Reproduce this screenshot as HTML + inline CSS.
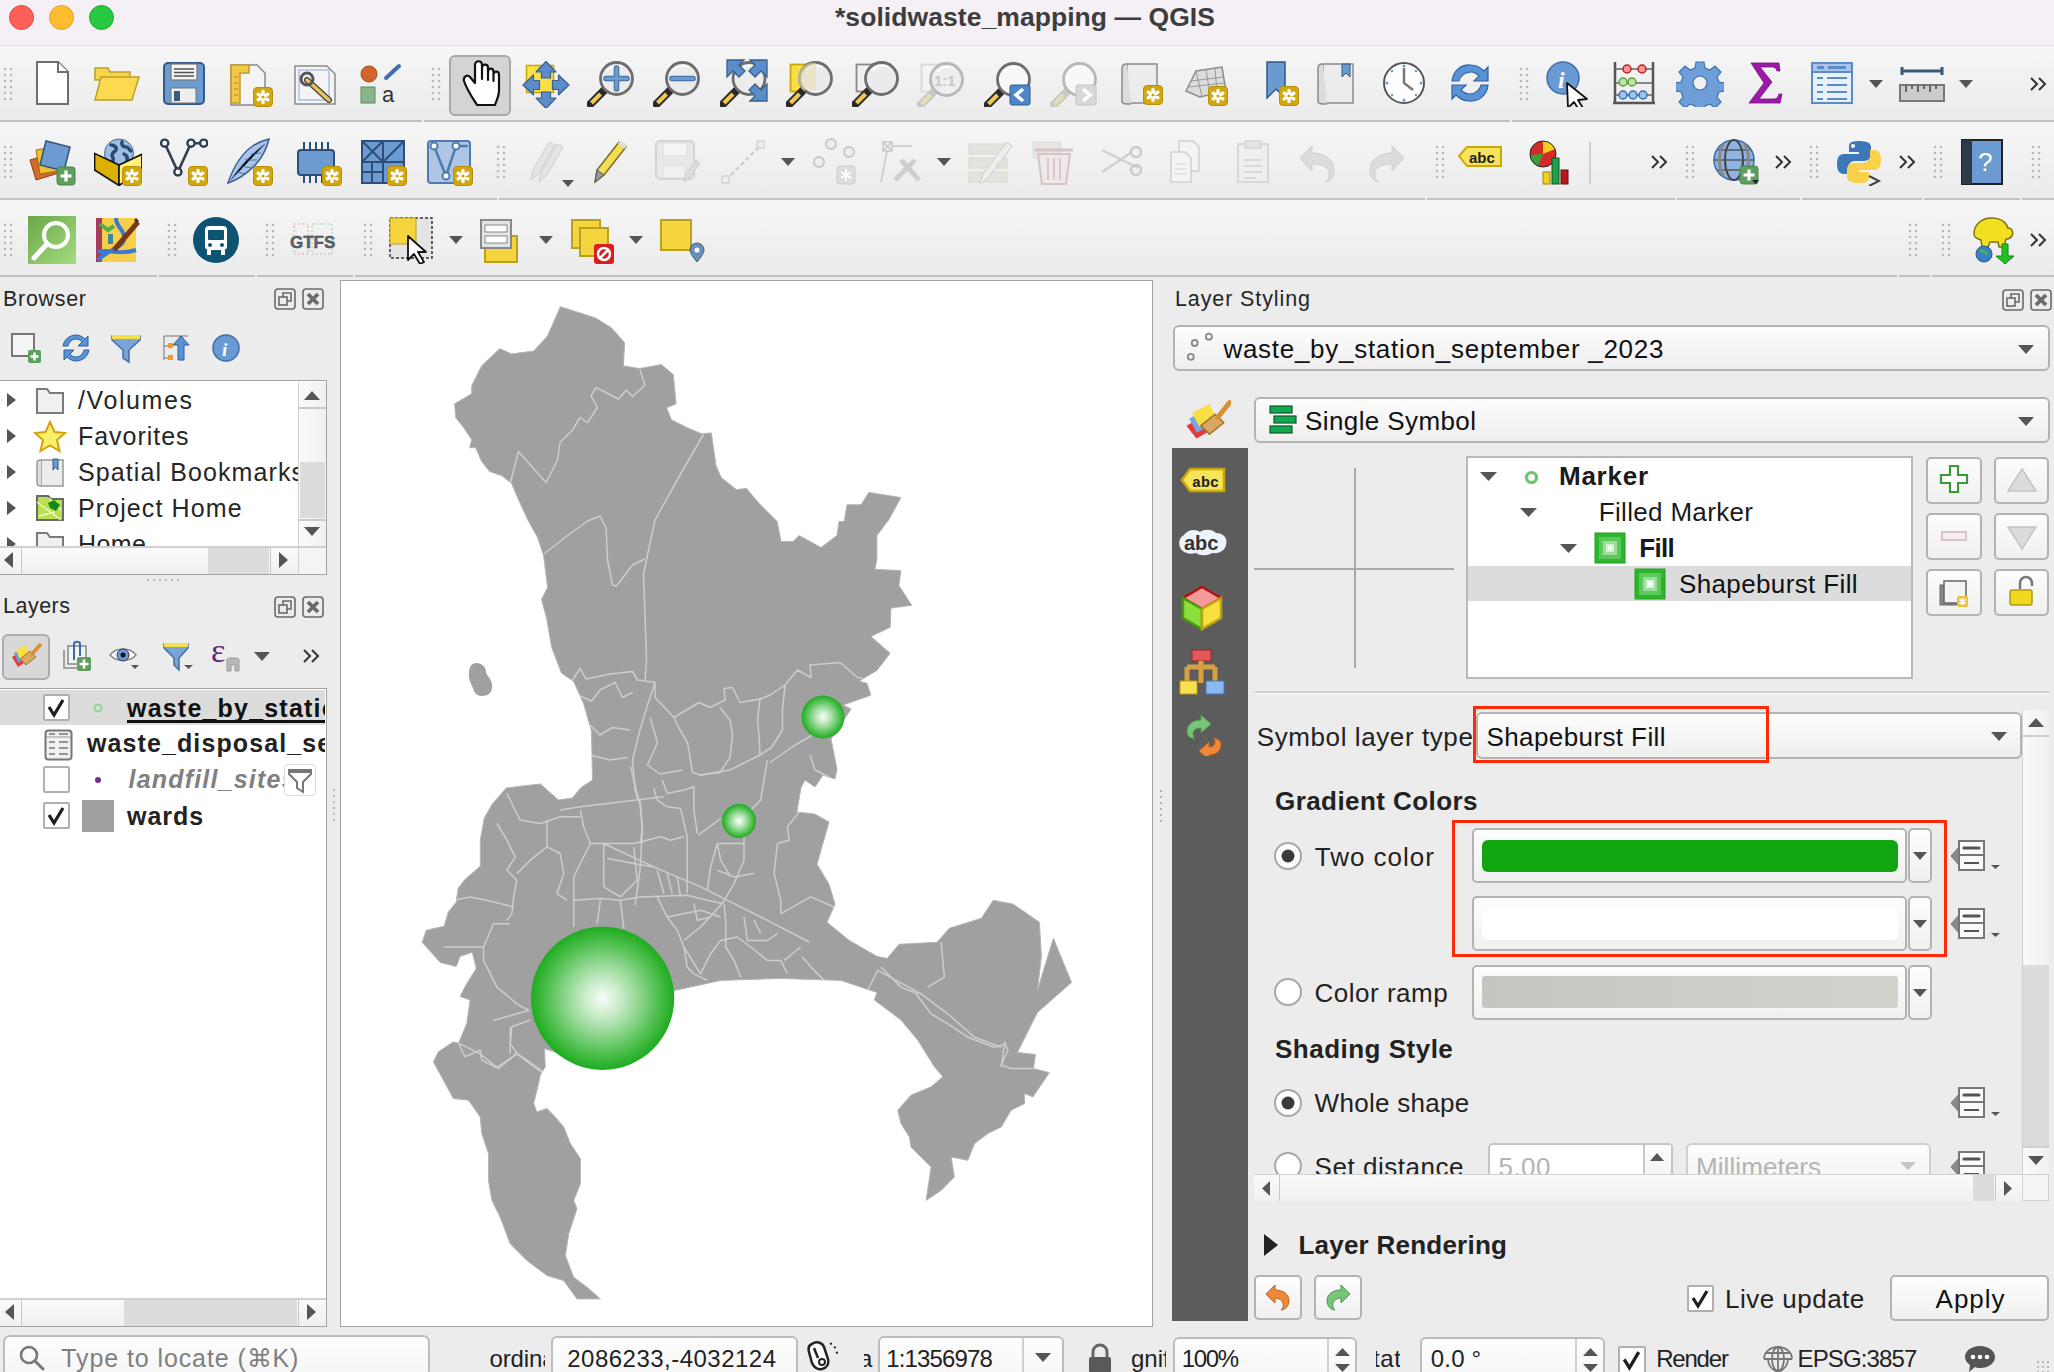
<!DOCTYPE html>
<html><head><meta charset="utf-8">
<style>
*{box-sizing:border-box}
html,body{margin:0;padding:0;width:2054px;height:1372px;overflow:hidden;background:#ececec;font-family:"Liberation Sans",sans-serif;color:#262626}
.a{position:absolute}
.t{position:absolute;white-space:nowrap;line-height:1}
.tl{position:absolute;top:5px;width:25px;height:25px;border-radius:50%}
.tb{position:absolute;left:0;width:2054px;background:linear-gradient(#f6f6f6,#ebebeb);border-bottom:2px solid #c2c2c2}
.grip{position:absolute;width:10px;background-image:radial-gradient(circle at 2px 2px,#b8b8b8 1.4px,transparent 1.6px);background-size:6px 6px}
.btn{position:absolute;border:2px solid #b4b4b4;border-radius:5px;background:linear-gradient(#fdfdfd,#f0f0f0)}
.cb{position:absolute;border:2px solid #a9a9a9;background:#fff;border-radius:2px}
</style></head><body>
<div class="a" style="left:0;top:0;width:2054px;height:46px;background:#f5f0f5;border-bottom:1px solid #dcd8dc"></div>
<div class="tl" style="left:9px;background:#fe5f57;border:1px solid #e2463f"></div>
<div class="tl" style="left:49px;background:#febc2e;border:1px solid #e1a325"></div>
<div class="tl" style="left:89px;background:#28c840;border:1px solid #1dad2b"></div>

<div class="t" style="left:835.0px;top:3.6px;font-size:26.5px;font-weight:bold;font-style:normal;color:#3d3d3d;letter-spacing:0.06px;">*solidwaste_mapping — QGIS</div>
<div class="tb" style="top:46px;height:76px"></div>
<div class="tb" style="top:122px;height:78px"></div>
<div class="tb" style="top:200px;height:77px"></div>
<div class="a" style="left:422px;top:120px;width:2px;height:2px;background:#ececec"></div>
<div class="a" style="left:497px;top:198px;width:2px;height:2px;background:#ececec"></div>
<div class="a" style="left:1425px;top:198px;width:2px;height:2px;background:#ececec"></div>
<div class="a" style="left:1675px;top:198px;width:2px;height:2px;background:#ececec"></div>
<div class="a" style="left:1800px;top:198px;width:2px;height:2px;background:#ececec"></div>
<div class="a" style="left:1922px;top:198px;width:2px;height:2px;background:#ececec"></div>
<div class="a" style="left:2020px;top:198px;width:2px;height:2px;background:#ececec"></div>
<div class="a" style="left:157px;top:275px;width:2px;height:2px;background:#ececec"></div>
<div class="a" style="left:255px;top:275px;width:2px;height:2px;background:#ececec"></div>
<div class="a" style="left:353px;top:275px;width:2px;height:2px;background:#ececec"></div>
<div class="a" style="left:1897px;top:275px;width:2px;height:2px;background:#ececec"></div>
<div class="a" style="left:1930px;top:275px;width:2px;height:2px;background:#ececec"></div>
<div class="a" style="left:1510px;top:120px;width:2px;height:2px;background:#ececec"></div>
<div class="grip" style="left:3px;top:67px;height:36px"></div>
<svg class="a" style="left:28px;top:59px" width="48" height="48" viewBox="0 0 48 48"><path d="M9 3h21l10 10v32H9z" fill="#fff" stroke="#6e6e6e" stroke-width="2"/><path d="M30 3v10h10" fill="#fff" stroke="#6e6e6e" stroke-width="2"/></svg>
<svg class="a" style="left:93px;top:59px" width="48" height="48" viewBox="0 0 48 48"><path d="M2 9h13l2 4h20v8H2z" fill="#f7d44c" stroke="#b9a028" stroke-width="1.5"/><path d="M2 41L8 18h38l-7 23z" fill="#fcd94e" stroke="#b9a028" stroke-width="1.5"/></svg>
<svg class="a" style="left:160px;top:59px" width="48" height="48" viewBox="0 0 48 48"><rect x="4" y="4" width="40" height="41" rx="4" fill="#6b9bd0" stroke="#365a86" stroke-width="2"/><rect x="11" y="5" width="26" height="16" fill="#f4f4f4" stroke="#777" stroke-width="1.2"/><path d="M14 10h20M14 13.5h20M14 17h20" stroke="#555" stroke-width="1.6"/><rect x="11" y="29" width="25" height="15" fill="#eee" stroke="#777"/><rect x="14" y="32" width="6" height="10" fill="#3d5a7a"/></svg>
<svg class="a" style="left:226px;top:59px" width="48" height="48" viewBox="0 0 48 48"><path d="M5 6h26l8 8v32H5z" fill="#f4f4f4" stroke="#8a8a8a" stroke-width="1.5"/><path d="M5 6h18v8h-9v30H5z" fill="#f3c84a" stroke="#c09b2c" stroke-width="1.5"/><path d="M8 18h4M8 24h4M8 30h4M8 36h4" stroke="#b08a20"/><rect x="27.5" y="28.5" width="19" height="19" rx="3.5" fill="#d3a80e" stroke="#b88f08" stroke-width="1"/><g stroke="#fff" stroke-width="3.4" stroke-linecap="round"><path d="M37 32.5v11M32.2 35.2l9.6 5.6M32.2 40.8l9.6-5.6"/></g><circle cx="37" cy="38" r="1.6" fill="#d3a80e"/></svg>
<svg class="a" style="left:292px;top:59px" width="48" height="48" viewBox="0 0 48 48"><path d="M3 7h32l8 8v30H3z" fill="#f4f4f4" stroke="#8a8a8a" stroke-width="1.5"/><rect x="7" y="11" width="30" height="30" fill="none" stroke="#a8c0e8" stroke-width="1.5"/><path d="M15 21l22 20" stroke="#444" stroke-width="6" stroke-linecap="round"/><path d="M15 21l22 20" stroke="#e8c25a" stroke-width="3.5" stroke-linecap="round"/><circle cx="15" cy="20" r="6" fill="none" stroke="#555" stroke-width="3"/></svg>
<svg class="a" style="left:358px;top:59px" width="48" height="48" viewBox="0 0 48 48"><circle cx="11" cy="15" r="8" fill="#d3642a" stroke="#a84c1e"/><path d="M28 19l13-12" stroke="#3f6fb0" stroke-width="4" stroke-linecap="round"/><rect x="3" y="28" width="14" height="16" fill="#8ab48a" stroke="#5a8a5a"/><text x="24" y="43" font-family="Liberation Sans" font-size="22" fill="#333">a</text></svg>
<div class="grip" style="left:431px;top:67px;height:36px"></div>
<div class="a" style="left:449px;top:55px;width:62px;height:61px;background:#d4d4d4;border:2px solid #a9a9a9;border-radius:6px"></div>
<svg class="a" style="left:457px;top:59px" width="48" height="48" viewBox="0 0 48 48"><path d="M20 46C15 38 10 31 7 22c-1-4 3-7 6-4l5 6V6c0-5 7-5 7 0v14V9c0-4.5 6-4.5 6 0v12V13c0-4.5 5.5-4.5 5.5 0v9V16c0-4.5 5.5-4.5 5.5 0v16c0 6-3 10-4 14z" fill="#fff" stroke="#111" stroke-width="2.2" stroke-linejoin="round"/></svg>
<svg class="a" style="left:522px;top:60px" width="48" height="48" viewBox="0 0 48 48"><rect x="4.5" y="5.5" width="27" height="27" fill="#f9e04a" stroke="#c8a800" stroke-width="1.5"/><g fill="#5b8ccb" stroke="#3a5f8a" stroke-width="1.2" stroke-linejoin="round"><path d="M24 1.5l10 10.5h-5.5v6h-9v-6H14z"/><path d="M24 48.5l10-10.5h-5.5v-6h-9v6H14z"/><path d="M1 25l10.5-10v5.5h6v9h-6V35z"/><path d="M47 25l-10.5-10v5.5h-6v9h6V35z"/></g></svg>
<svg class="a" style="left:587px;top:59px" width="48" height="48" viewBox="0 0 48 48"><path d="M3.5 45l13.5-13.5" stroke="#2a2a2a" stroke-width="8" stroke-linecap="square"/><path d="M4.5 44l9-9" stroke="#f2c94c" stroke-width="4" stroke-linecap="butt"/><circle cx="17" cy="31.5" r="2" fill="#2a2a2a"/><circle cx="29.5" cy="19.5" r="16" fill="#ececec" stroke="#6e6e6e" stroke-width="2.8"/><path d="M20 12a13 13 0 0 1 16-4" stroke="#fff" stroke-width="2" fill="none" opacity="0.8"/><path d="M29.5 9v21M19 19.5h21" stroke="#3f6a9a" stroke-width="5.5" stroke-linecap="round"/><path d="M29.5 9v21M19 19.5h21" stroke="#6b9bd0" stroke-width="3.5" stroke-linecap="round"/></svg>
<svg class="a" style="left:653px;top:59px" width="48" height="48" viewBox="0 0 48 48"><path d="M3.5 45l13.5-13.5" stroke="#2a2a2a" stroke-width="8" stroke-linecap="square"/><path d="M4.5 44l9-9" stroke="#f2c94c" stroke-width="4" stroke-linecap="butt"/><circle cx="17" cy="31.5" r="2" fill="#2a2a2a"/><circle cx="29.5" cy="19.5" r="16" fill="#ececec" stroke="#6e6e6e" stroke-width="2.8"/><path d="M20 12a13 13 0 0 1 16-4" stroke="#fff" stroke-width="2" fill="none" opacity="0.8"/><path d="M19 19.5h21" stroke="#3f6a9a" stroke-width="5.5" stroke-linecap="round"/><path d="M19 19.5h21" stroke="#6b9bd0" stroke-width="3.5" stroke-linecap="round"/></svg>
<svg class="a" style="left:720px;top:59px" width="48" height="48" viewBox="0 0 48 48"><path d="M3.0 45l13.5-13.5" stroke="#2a2a2a" stroke-width="8" stroke-linecap="square"/><path d="M4.0 44l9-9" stroke="#f2c94c" stroke-width="4" stroke-linecap="butt"/><circle cx="16.5" cy="31.5" r="2" fill="#2a2a2a"/><circle cx="29.0" cy="19.5" r="16" fill="#ececec" stroke="#6e6e6e" stroke-width="2.8"/><path d="M19.5 12a13 13 0 0 1 16-4" stroke="#fff" stroke-width="2" fill="none" opacity="0.8"/><g fill="#5b8ccb" stroke="#3a5f8a" stroke-width="1.3" stroke-linejoin="miter"><path d="M7 1h17l-5 5 6 6-6 6-6-6-6 6z"/><path d="M47 1H30l5 5-6 6 6 6 6-6 6 6z"/><path d="M47 42H30l5-5-6-6 6-6 6 6 6-6z"/></g></svg>
<svg class="a" style="left:786px;top:59px" width="48" height="48" viewBox="0 0 48 48"><rect x="4.5" y="5.5" width="16" height="27" fill="#f9e04a" stroke="#c8a800" stroke-width="1.8"/><path d="M3.5 45l13.5-13.5" stroke="#2a2a2a" stroke-width="8" stroke-linecap="square"/><path d="M4.5 44l9-9" stroke="#f2c94c" stroke-width="4" stroke-linecap="butt"/><circle cx="17" cy="31.5" r="2" fill="#2a2a2a"/><circle cx="29.5" cy="19.5" r="16" fill="#ebebeb" stroke="#6e6e6e" stroke-width="2.8"/><path d="M20 12a13 13 0 0 1 16-4" stroke="#fff" stroke-width="2" fill="none" opacity="0.8"/><path d="M17 8a16 16 0 0 0 0 23h13V4a16 16 0 0 0-13 4z" fill="#e8e0b0" opacity="0.6"/></svg>
<svg class="a" style="left:852px;top:59px" width="48" height="48" viewBox="0 0 48 48"><rect x="4.5" y="5.5" width="16" height="27" fill="#f0f0f0" stroke="#8a8a8a" stroke-width="1.8"/><path d="M3.5 45l13.5-13.5" stroke="#2a2a2a" stroke-width="8" stroke-linecap="square"/><path d="M4.5 44l9-9" stroke="#f2c94c" stroke-width="4" stroke-linecap="butt"/><circle cx="17" cy="31.5" r="2" fill="#2a2a2a"/><circle cx="29.5" cy="19.5" r="16" fill="#ebebeb" stroke="#6e6e6e" stroke-width="2.8"/><path d="M20 12a13 13 0 0 1 16-4" stroke="#fff" stroke-width="2" fill="none" opacity="0.8"/></svg>
<svg class="a" style="left:917px;top:59px" width="48" height="48" viewBox="0 0 48 48"><rect x="4.5" y="5.5" width="16" height="27" fill="#f4f4f4" stroke="#d8d8d8" stroke-width="1.8"/><path d="M3.5 46l13.5-13.5" stroke="#c8c8c8" stroke-width="8" stroke-linecap="square"/><path d="M4.5 45l9-9" stroke="#e4e0b0" stroke-width="4" stroke-linecap="butt"/><circle cx="17" cy="32.5" r="2" fill="#c8c8c8"/><circle cx="29.5" cy="20.5" r="16" fill="#eeeeee" stroke="#b8b8b8" stroke-width="2.8"/><path d="M20 13a13 13 0 0 1 16-4" stroke="#fff" stroke-width="2" fill="none" opacity="0.8"/><text x="17" y="27" font-family="Liberation Sans" font-weight="bold" font-size="15" fill="#c8c8c8">1:1</text></svg>
<svg class="a" style="left:984px;top:59px" width="48" height="48" viewBox="0 0 48 48"><path d="M3.5 46l13.5-13.5" stroke="#2a2a2a" stroke-width="8" stroke-linecap="square"/><path d="M4.5 45l9-9" stroke="#f2c94c" stroke-width="4" stroke-linecap="butt"/><circle cx="17" cy="32.5" r="2" fill="#2a2a2a"/><circle cx="29.5" cy="20.5" r="16" fill="#f8f8f8" stroke="#6e6e6e" stroke-width="2.8"/><path d="M20 13a13 13 0 0 1 16-4" stroke="#fff" stroke-width="2" fill="none" opacity="0.8"/><rect x="26" y="26" width="20" height="20" rx="2" fill="#4f86c6" stroke="#2c5c94"/><path d="M39 30l-7 6 7 6" fill="none" stroke="#fff" stroke-width="3.5"/></svg>
<svg class="a" style="left:1050px;top:59px" width="48" height="48" viewBox="0 0 48 48"><path d="M3.5 46l13.5-13.5" stroke="#c8c8c8" stroke-width="8" stroke-linecap="square"/><path d="M4.5 45l9-9" stroke="#e4e0b0" stroke-width="4" stroke-linecap="butt"/><circle cx="17" cy="32.5" r="2" fill="#c8c8c8"/><circle cx="29.5" cy="20.5" r="16" fill="#f8f8f8" stroke="#b8b8b8" stroke-width="2.8"/><path d="M20 13a13 13 0 0 1 16-4" stroke="#fff" stroke-width="2" fill="none" opacity="0.8"/><rect x="26" y="26" width="20" height="20" rx="2" fill="#d8d8d8" stroke="#c4c4c4"/><path d="M33 30l7 6-7 6" fill="none" stroke="#fff" stroke-width="3.5"/></svg>
<svg class="a" style="left:1118px;top:59px" width="48" height="48" viewBox="0 0 48 48"><path d="M9 5h30v39H9z" fill="#ececec" stroke="#8a8a8a" stroke-width="1.5"/><path d="M9 5c-4 0-5 2-5 4v33c0 2 2 3 5 3h4" fill="#dcdcdc" stroke="#8a8a8a" stroke-width="1.5"/><rect x="25.5" y="26.5" width="19" height="19" rx="3.5" fill="#d3a80e" stroke="#b88f08" stroke-width="1"/><g stroke="#fff" stroke-width="3.4" stroke-linecap="round"><path d="M35 30.5v11M30.2 33.2l9.6 5.6M30.2 38.8l9.6-5.6"/></g><circle cx="35" cy="36" r="1.6" fill="#d3a80e"/></svg>
<svg class="a" style="left:1182px;top:59px" width="48" height="48" viewBox="0 0 48 48"><path d="M4 32l10-20 26-4 4 24-26 6z" fill="#dcdcdc" stroke="#8c8c8c" stroke-width="1.5"/><path d="M9 22l32-4M6 28l37-4M14 12l6 26M24 10l4 26M33 9l2 25" stroke="#999" stroke-width="1"/><rect x="26.5" y="27.5" width="19" height="19" rx="3.5" fill="#d3a80e" stroke="#b88f08" stroke-width="1"/><g stroke="#fff" stroke-width="3.4" stroke-linecap="round"><path d="M36 31.5v11M31.2 34.2l9.6 5.6M31.2 39.8l9.6-5.6"/></g><circle cx="36" cy="37" r="1.6" fill="#d3a80e"/></svg>
<svg class="a" style="left:1255px;top:59px" width="48" height="48" viewBox="0 0 48 48"><path d="M12 3h18v36l-9-9-9 9z" fill="#6a9ad0" stroke="#2f5a8a" stroke-width="1.5"/><rect x="24.5" y="27.5" width="19" height="19" rx="3.5" fill="#d3a80e" stroke="#b88f08" stroke-width="1"/><g stroke="#fff" stroke-width="3.4" stroke-linecap="round"><path d="M34 31.5v11M29.2 34.2l9.6 5.6M29.2 39.8l9.6-5.6"/></g><circle cx="34" cy="37" r="1.6" fill="#d3a80e"/></svg>
<svg class="a" style="left:1314px;top:59px" width="48" height="48" viewBox="0 0 48 48"><path d="M9 5h30v39H9z" fill="#ececec" stroke="#8a8a8a" stroke-width="1.5"/><path d="M9 5c-4 0-5 2-5 4v33c0 2 2 3 5 3h4" fill="#dcdcdc" stroke="#8a8a8a" stroke-width="1.5"/><path d="M28 5h8v13l-4-4-4 4z" fill="#6a9ad0" stroke="#2f5a8a"/></svg>
<svg class="a" style="left:1380px;top:59px" width="48" height="48" viewBox="0 0 48 48"><circle cx="24" cy="24" r="20" fill="#fff" stroke="#555" stroke-width="2"/><path d="M24 9v15l9 7" fill="none" stroke="#777" stroke-width="2.5"/><g fill="#6a9ad0"><circle cx="24" cy="7" r="1.5"/><circle cx="41" cy="24" r="1.5"/><circle cx="24" cy="41" r="1.5"/><circle cx="7" cy="24" r="1.5"/><circle cx="36" cy="12" r="1.3"/><circle cx="36" cy="36" r="1.3"/><circle cx="12" cy="36" r="1.3"/><circle cx="12" cy="12" r="1.3"/></g></svg>
<svg class="a" style="left:1446px;top:59px" width="48" height="48" viewBox="0 0 48 48"><path d="M6 22c1-10 9-17 19-16 6 0 10 3 13 6l4-4v14H28l5-5c-2-2-5-4-8-4-6 0-11 4-12 9z" fill="#5a92d6" stroke="#2c62a6" stroke-width="1.2"/><path d="M42 26c-1 10-9 17-19 16-6 0-10-3-13-6l-4 4V26h14l-5 5c2 2 5 4 8 4 6 0 11-4 12-9z" fill="#5a92d6" stroke="#2c62a6" stroke-width="1.2"/></svg>
<div class="grip" style="left:1519px;top:67px;height:36px"></div>
<svg class="a" style="left:1544px;top:59px" width="48" height="48" viewBox="0 0 48 48"><circle cx="19" cy="19" r="16" fill="#6a9ad4" stroke="#3f6ea8" stroke-width="1.5"/><text x="14" y="29" font-family="Liberation Serif" font-style="italic" font-weight="bold" font-size="24" fill="#fff">i</text><path d="M23 24l20 16-9 1 5 8-4 2-5-8-6 6z" fill="#fff" stroke="#111" stroke-width="1.8" stroke-linejoin="round"/></svg>
<svg class="a" style="left:1610px;top:59px" width="48" height="48" viewBox="0 0 48 48"><path d="M5 3v40M43 3v40M3 44h42" stroke="#555" stroke-width="2.5"/><path d="M5 10h38M5 24h38M5 36h38" stroke="#666" stroke-width="1.5"/><g stroke-width="1.5"><circle cx="17" cy="10" r="4" fill="#f29a9a" stroke="#c02020"/><circle cx="32" cy="10" r="4" fill="#f29a9a" stroke="#c02020"/><circle cx="13" cy="23" r="4" fill="#bfe3a8" stroke="#58a040"/><circle cx="22" cy="23" r="4" fill="#bfe3a8" stroke="#58a040"/><circle cx="13" cy="36" r="4" fill="#9cc4ea" stroke="#3570b0"/><circle cx="23" cy="36" r="4" fill="#9cc4ea" stroke="#3570b0"/><circle cx="33" cy="36" r="4" fill="#9cc4ea" stroke="#3570b0"/></g></svg>
<svg class="a" style="left:1676px;top:59px" width="48" height="48" viewBox="0 0 48 48"><path d="M20 3h8l1 6 5 2 5-4 6 6-4 5 2 5 6 1v8l-6 1-2 5 4 5-6 6-5-4-5 2-1 6h-8l-1-6-5-2-5 4-6-6 4-5-2-5-6-1v-8l6-1 2-5-4-5 6-6 5 4 5-2z" fill="#6e9fd8" stroke="#3f70ae" stroke-width="1.2"/><circle cx="24" cy="24" r="7" fill="#f0f0f0" stroke="#3f70ae" stroke-width="1.2"/></svg>
<svg class="a" style="left:1741px;top:59px" width="48" height="48" viewBox="0 0 48 48"><path d="M10 4h28l1 8h-3c-1-3-2-4-5-4H19l12 15-13 17h15c3 0 4-2 5-5h3l-2 9H8l15-20z" fill="#9a1aa8" stroke="#7a1088" stroke-width="0.8"/></svg>
<svg class="a" style="left:1808px;top:59px" width="48" height="48" viewBox="0 0 48 48"><rect x="4" y="4" width="40" height="40" fill="#e8f0fa" stroke="#5c8cc8" stroke-width="2"/><rect x="4" y="4" width="40" height="9" fill="#a8c4e8" stroke="#5c8cc8" stroke-width="2"/><path d="M9 8.5h7M20 8.5h18" stroke="#5c8cc8" stroke-width="3"/><path d="M9 19h6M19 19h20M9 26h6M19 26h20M9 33h6M19 33h20M9 40h6M19 40h20" stroke="#5c8cc8" stroke-width="2"/></svg>
<svg class="a" style="left:1869px;top:80px" width="14" height="8" viewBox="0 0 14 8"><path d="M0 0h14l-7.0 8z" fill="#555"/></svg>
<svg class="a" style="left:1898px;top:59px" width="48" height="48" viewBox="0 0 48 48"><path d="M4 12h40M4 8v8M44 8v8" stroke="#3a5a7a" stroke-width="3"/><rect x="2" y="26" width="44" height="16" fill="#ccc" stroke="#777" stroke-width="2"/><path d="M8 26v7M14 26v4M20 26v7M26 26v4M32 26v7M38 26v4" stroke="#666" stroke-width="2"/></svg>
<svg class="a" style="left:1959px;top:80px" width="14" height="8" viewBox="0 0 14 8"><path d="M0 0h14l-7.0 8z" fill="#555"/></svg>
<svg class="a" style="left:2028px;top:75px" width="20" height="18" viewBox="0 0 20 18"><path d="M3 3l6 6-6 6M11 3l6 6-6 6" fill="none" stroke="#333" stroke-width="2"/></svg>
<div class="grip" style="left:3px;top:145px;height:36px"></div>
<svg class="a" style="left:28px;top:138px" width="48" height="48" viewBox="0 0 48 48"><path d="M2 22l26-8 6 20-26 8z" fill="#d56a2e" stroke="#8e4215"/><path d="M8 12l24-4 4 24-24 4z" fill="#f0c030" stroke="#8a7010"/><path d="M18 3l24 6-6 24-24-6z" fill="#6b9bd0" stroke="#34557e" stroke-width="1.5"/><rect x="29" y="29" width="18" height="18" rx="3" fill="#5e9e5e" stroke="#4b864b"/><path d="M38 32.5v11M32.5 38h11" stroke="#fff" stroke-width="3.2"/></svg>
<svg class="a" style="left:94px;top:138px" width="48" height="48" viewBox="0 0 48 48"><circle cx="25" cy="15.5" r="14.5" fill="#9dbde4" stroke="#4a6a90" stroke-width="1"/><path d="M17 7c3 0 6 2 5 5-1 2-4 2-4 5 0 2 2 3 1 6M28 4c-1 3 1 5 4 5s3 3 5 4M30 16c2 1 4 3 3 6" stroke="#2c4a70" stroke-width="3.5" fill="none" stroke-linecap="round"/><path d="M0.6 15.4L25 27v20.5L0.6 32z" fill="#dcb000" stroke="#111" stroke-width="1.6" stroke-linejoin="round"/><path d="M25 27l22.9-10.7V32L25 47.5z" fill="#fbf07a" stroke="#111" stroke-width="1.6" stroke-linejoin="round"/><rect x="28.5" y="28.5" width="19" height="19" rx="3.5" fill="#d3a80e" stroke="#b88f08" stroke-width="1"/><g stroke="#fff" stroke-width="3.4" stroke-linecap="round"><path d="M38 32.5v11M33.2 35.2l9.6 5.6M33.2 40.8l9.6-5.6"/></g><circle cx="38" cy="38" r="1.6" fill="#d3a80e"/></svg>
<svg class="a" style="left:160px;top:138px" width="48" height="48" viewBox="0 0 48 48"><path d="M4.7 5.2l13.2 28.7L31 5.2h12.7" fill="none" stroke="#2f3f55" stroke-width="2.6"/><circle cx="4.7" cy="5.2" r="3.6" fill="#fff" stroke="#2f3f55" stroke-width="2.4"/><circle cx="17.9" cy="33.9" r="3.6" fill="#fff" stroke="#2f3f55" stroke-width="2.4"/><circle cx="31" cy="5.2" r="3.6" fill="#fff" stroke="#2f3f55" stroke-width="2.4"/><circle cx="43.7" cy="5.2" r="3.6" fill="#fff" stroke="#2f3f55" stroke-width="2.4"/><rect x="28.5" y="28.5" width="19" height="19" rx="3.5" fill="#d3a80e" stroke="#b88f08" stroke-width="1"/><g stroke="#fff" stroke-width="3.4" stroke-linecap="round"><path d="M38 32.5v11M33.2 35.2l9.6 5.6M33.2 40.8l9.6-5.6"/></g><circle cx="38" cy="38" r="1.6" fill="#d3a80e"/></svg>
<svg class="a" style="left:225px;top:138px" width="48" height="48" viewBox="0 0 48 48"><path d="M3 45c5-15 14-30 26-38 5-3 11-5 15-6-2 8-6 17-12 24C22 36 12 42 3 45z" fill="#a8c4e8" stroke="#3a5f8e" stroke-width="1.5"/><path d="M6 42c8-12 18-24 34-36" stroke="#3a5f8e" stroke-width="1"/><path d="M12 34l8 2M16 28l10 2M20 22l12 0M26 16l10-1" stroke="#3a5f8e" stroke-width="0.8"/><rect x="28.5" y="28.5" width="19" height="19" rx="3.5" fill="#d3a80e" stroke="#b88f08" stroke-width="1"/><g stroke="#fff" stroke-width="3.4" stroke-linecap="round"><path d="M38 32.5v11M33.2 35.2l9.6 5.6M33.2 40.8l9.6-5.6"/></g><circle cx="38" cy="38" r="1.6" fill="#d3a80e"/></svg>
<svg class="a" style="left:295px;top:138px" width="48" height="48" viewBox="0 0 48 48"><rect x="3" y="12" width="36" height="25" rx="3" fill="#6b9bd0" stroke="#2d4e78" stroke-width="2"/><path d="M9 4v8M15 4v8M21 4v8M27 4v8M33 4v8M9 37v8M15 37v8M21 37v8M27 37v8" stroke="#2d4e78" stroke-width="2"/><rect x="27.5" y="28.5" width="19" height="19" rx="3.5" fill="#d3a80e" stroke="#b88f08" stroke-width="1"/><g stroke="#fff" stroke-width="3.4" stroke-linecap="round"><path d="M37 32.5v11M32.2 35.2l9.6 5.6M32.2 40.8l9.6-5.6"/></g><circle cx="37" cy="38" r="1.6" fill="#d3a80e"/></svg>
<svg class="a" style="left:359px;top:138px" width="48" height="48" viewBox="0 0 48 48"><rect x="3" y="3" width="42" height="42" fill="#6b9bd0" stroke="#2d4e78" stroke-width="2"/><path d="M24 3v42M3 24h42M3 3l21 21M24 3L3 24M45 3L24 24M13 24v21M3 34h21" stroke="#2d4e78" stroke-width="2"/><rect x="28.5" y="28.5" width="19" height="19" rx="3.5" fill="#d3a80e" stroke="#b88f08" stroke-width="1"/><g stroke="#fff" stroke-width="3.4" stroke-linecap="round"><path d="M38 32.5v11M33.2 35.2l9.6 5.6M33.2 40.8l9.6-5.6"/></g><circle cx="38" cy="38" r="1.6" fill="#d3a80e"/></svg>
<svg class="a" style="left:425px;top:138px" width="48" height="48" viewBox="0 0 48 48"><rect x="3" y="3" width="42" height="42" rx="3" fill="#aec6e4" stroke="#4f7bb0" stroke-width="2"/><path d="M9 8l12 30 10-30h12" fill="none" stroke="#4f7bb0" stroke-width="2.5"/><circle cx="9" cy="8" r="3.5" fill="#fff" stroke="#4f7bb0" stroke-width="2"/><circle cx="21" cy="38" r="3.5" fill="#fff" stroke="#4f7bb0" stroke-width="2"/><circle cx="31" cy="8" r="3.5" fill="#fff" stroke="#4f7bb0" stroke-width="2"/><rect x="28.5" y="28.5" width="19" height="19" rx="3.5" fill="#d3a80e" stroke="#b88f08" stroke-width="1"/><g stroke="#fff" stroke-width="3.4" stroke-linecap="round"><path d="M38 32.5v11M33.2 35.2l9.6 5.6M33.2 40.8l9.6-5.6"/></g><circle cx="38" cy="38" r="1.6" fill="#d3a80e"/></svg>
<div class="grip" style="left:496px;top:145px;height:36px"></div>
<svg class="a" style="left:523px;top:138px" width="48" height="48" viewBox="0 0 48 48"><g fill="#e4e4e4" stroke="#cfcfcf"><path d="M8 42l2-10 16-28 6 3-16 28z"/><path d="M16 44l2-10 16-28 6 3-16 28z"/></g></svg>
<svg class="a" style="left:562px;top:180px" width="12" height="7" viewBox="0 0 12 7"><path d="M0 0h12l-6.0 7z" fill="#555"/></svg>
<svg class="a" style="left:587px;top:138px" width="48" height="48" viewBox="0 0 48 48"><path d="M8 44l2-12 22-28 7 5-22 28z" fill="#f3dd55" stroke="#7a6a20" stroke-width="1.5"/><path d="M8 44l2-12 7 5z" fill="#999" stroke="#555"/><path d="M32 4l7 5" stroke="#ddd" stroke-width="4"/></svg>
<svg class="a" style="left:654px;top:138px" width="48" height="48" viewBox="0 0 48 48"><rect x="2" y="3" width="38" height="38" rx="4" fill="#e8e8e8" stroke="#d4d4d4" stroke-width="2"/><rect x="9" y="5" width="24" height="13" fill="#f4f4f4" stroke="#ddd"/><rect x="9" y="27" width="22" height="13" fill="#f0f0f0" stroke="#ddd"/><path d="M30 44l2-8 10-14 4 3-10 14z" fill="#ddd" stroke="#ccc"/></svg>
<svg class="a" style="left:720px;top:138px" width="48" height="48" viewBox="0 0 48 48"><path d="M6 42L40 8" stroke="#c8c8c8" stroke-width="2" stroke-dasharray="4 3"/><rect x="2" y="38" width="7" height="7" fill="#eee" stroke="#c8c8c8"/><rect x="37" y="3" width="7" height="7" fill="#eee" stroke="#c8c8c8"/></svg>
<svg class="a" style="left:781px;top:158px" width="14" height="8" viewBox="0 0 14 8"><path d="M0 0h14l-7.0 8z" fill="#555"/></svg>
<svg class="a" style="left:811px;top:138px" width="48" height="48" viewBox="0 0 48 48"><g fill="#eee" stroke="#c8c8c8" stroke-width="2"><circle cx="20" cy="6" r="5"/><circle cx="38" cy="14" r="5"/><circle cx="8" cy="24" r="5"/></g><rect x="26" y="28" width="18" height="18" rx="3" fill="#ddd" stroke="#ccc"/><path d="M35 31v12M30 34l10 6M30 40l10-6" stroke="#fff" stroke-width="2"/></svg>
<svg class="a" style="left:877px;top:138px" width="48" height="48" viewBox="0 0 48 48"><rect x="6" y="4" width="9" height="9" fill="none" stroke="#c8c8c8" stroke-width="1.5"/><path d="M6 4l9 9M15 4l-9 9M15 8h20M10 13L4 44" stroke="#c8c8c8" stroke-width="1.5"/><path d="M18 42l20-20M24 22l18 20" stroke="#cfcfcf" stroke-width="5"/></svg>
<svg class="a" style="left:937px;top:158px" width="14" height="8" viewBox="0 0 14 8"><path d="M0 0h14l-7.0 8z" fill="#555"/></svg>
<svg class="a" style="left:966px;top:138px" width="48" height="48" viewBox="0 0 48 48"><rect x="3" y="6" width="38" height="10" fill="#e4e2dc" stroke="#d8d6d0"/><rect x="3" y="20" width="38" height="10" fill="#e4e2dc" stroke="#d8d6d0"/><rect x="3" y="34" width="38" height="10" fill="#e4e2dc" stroke="#d8d6d0"/><path d="M14 46l3-10 24-32 5 4-24 32z" fill="#eee" stroke="#ccc"/></svg>
<svg class="a" style="left:1030px;top:138px" width="48" height="48" viewBox="0 0 48 48"><rect x="3" y="4" width="28" height="16" fill="#e8e4e0" stroke="#ddd"/><path d="M8 16h32l-4 30H12z" fill="#f0e8e8" stroke="#d4c4c4" stroke-width="2"/><path d="M5 12h38" stroke="#d4c4c4" stroke-width="3"/><path d="M18 20v22M24 20v22M30 20v22" stroke="#dcc8c8" stroke-width="2"/></svg>
<svg class="a" style="left:1098px;top:138px" width="48" height="48" viewBox="0 0 48 48"><path d="M4 12l36 18M4 34l30-20" stroke="#d0d0d0" stroke-width="2.5"/><circle cx="38" cy="14" r="5" fill="none" stroke="#d0c8d0" stroke-width="2.5"/><circle cx="38" cy="32" r="5" fill="none" stroke="#d0c8d0" stroke-width="2.5"/></svg>
<svg class="a" style="left:1163px;top:138px" width="48" height="48" viewBox="0 0 48 48"><path d="M16 3h14l6 6v24H16z" fill="#f4f4f4" stroke="#d0d0d0" stroke-width="1.5"/><path d="M8 14h14l6 6v24H8z" fill="#f4f4f4" stroke="#d0d0d0" stroke-width="1.5"/><path d="M12 26h12M12 31h12M12 36h12" stroke="#d4d4d4"/></svg>
<svg class="a" style="left:1230px;top:138px" width="48" height="48" viewBox="0 0 48 48"><rect x="8" y="6" width="30" height="38" fill="#efefef" stroke="#d0d0d0" stroke-width="1.5"/><rect x="15" y="3" width="16" height="7" fill="#e4e4e4" stroke="#ccc"/><path d="M14 22h18M14 28h18M14 34h18M14 40h12" stroke="#d4d4d4" stroke-width="1.5"/></svg>
<svg class="a" style="left:1296px;top:138px" width="48" height="48" viewBox="0 0 48 48"><path d="M4 20l12-12v7c12 0 22 6 22 18 0 6-4 10-8 11 3-3 4-6 3-10-1-5-6-8-17-8v7z" fill="#dcdcdc" stroke="#cfcfcf"/></svg>
<svg class="a" style="left:1360px;top:138px" width="48" height="48" viewBox="0 0 48 48"><path d="M44 20L32 8v7c-12 0-22 6-22 18 0 6 4 10 8 11-3-3-4-6-3-10 1-5 6-8 17-8v7z" fill="#dcdcdc" stroke="#cfcfcf"/></svg>
<div class="grip" style="left:1435px;top:145px;height:36px"></div>
<svg class="a" style="left:1457px;top:138px" width="48" height="48" viewBox="0 0 48 48"><path d="M2 18l8-9h34v19H10z" fill="#f8e45a" stroke="#c9a80a" stroke-width="2"/><text x="12" y="25" font-family="Liberation Sans" font-weight="bold" font-size="15" fill="#222">abc</text></svg>
<svg class="a" style="left:1526px;top:138px" width="48" height="48" viewBox="0 0 48 48"><circle cx="17" cy="16" r="13" fill="#d42a2a"/><path d="M17 16V3a13 13 0 0 1 12 8z" fill="#f5d21a"/><path d="M17 16L4 17a13 13 0 0 0 8 11z" fill="#3aa03a"/><circle cx="17" cy="16" r="13" fill="none" stroke="#222" stroke-width="1"/><rect x="17" y="34" width="7" height="12" fill="#f5d21a" stroke="#a08010"/><rect x="26" y="20" width="7" height="26" fill="#1fa04a" stroke="#0a5020"/><rect x="35" y="32" width="7" height="14" fill="#b41a1a" stroke="#601010"/></svg>
<div class="a" style="left:1589px;top:142px;width:2px;height:42px;background:#d0d0d0"></div>
<svg class="a" style="left:1649px;top:153px" width="20" height="18" viewBox="0 0 20 18"><path d="M3 3l6 6-6 6M11 3l6 6-6 6" fill="none" stroke="#333" stroke-width="2"/></svg>
<div class="grip" style="left:1685px;top:145px;height:36px"></div>
<svg class="a" style="left:1712px;top:138px" width="48" height="48" viewBox="0 0 48 48"><circle cx="22" cy="22" r="20" fill="#8fb4e4" stroke="#3a6aa8" stroke-width="1.5"/><ellipse cx="22" cy="22" rx="9" ry="20" fill="none" stroke="#444" stroke-width="2"/><path d="M2 22h40M6 12h32M6 32h32" stroke="#555" stroke-width="1.5"/><path d="M12 6c-6 6-6 26 0 32M32 6c6 6 6 26 0 32" stroke="#888" stroke-width="3" fill="none"/><rect x="28" y="28" width="18" height="18" rx="3" fill="#5e9e5e" stroke="#4b864b"/><path d="M37 31.5v11M31.5 37h11" stroke="#fff" stroke-width="3.2"/><path d="M40 42h7l-3.5 4z" fill="#222"/></svg>
<svg class="a" style="left:1773px;top:153px" width="20" height="18" viewBox="0 0 20 18"><path d="M3 3l6 6-6 6M11 3l6 6-6 6" fill="none" stroke="#333" stroke-width="2"/></svg>
<div class="grip" style="left:1809px;top:145px;height:36px"></div>
<svg class="a" style="left:1835px;top:138px" width="48" height="48" viewBox="0 0 48 48"><path d="M23 3c-9 0-9 4-9 6v5h10v2H9c-5 0-7 4-7 10s2 10 7 10h4v-6c0-4 3-7 7-7h9c4 0 7-3 7-6V9c0-4-4-6-13-6z" fill="#3c78b8"/><circle cx="18" cy="8" r="2" fill="#fff"/><path d="M25 45c9 0 9-4 9-6v-5H24v-2h15c5 0 7-4 7-10s-2-10-7-10h-4v6c0 4-3 7-7 7h-9c-4 0-7 3-7 6v8c0 4 4 6 13 6z" fill="#f8d04a"/><path d="M34 38l10 5-10 5" fill="none" stroke="#444" stroke-width="2"/></svg>
<svg class="a" style="left:1897px;top:153px" width="20" height="18" viewBox="0 0 20 18"><path d="M3 3l6 6-6 6M11 3l6 6-6 6" fill="none" stroke="#333" stroke-width="2"/></svg>
<div class="grip" style="left:1933px;top:145px;height:36px"></div>
<svg class="a" style="left:1958px;top:138px" width="48" height="48" viewBox="0 0 48 48"><rect x="4" y="2" width="40" height="44" fill="#6b9bd0" stroke="#222" stroke-width="2"/><rect x="4" y="2" width="10" height="44" fill="#2c3a4a"/><text x="20" y="33" font-family="Liberation Sans" font-size="26" fill="#fff">?</text></svg>
<div class="grip" style="left:2031px;top:145px;height:36px"></div>
<div class="grip" style="left:3px;top:223px;height:36px"></div>
<svg class="a" style="left:28px;top:216px" width="48" height="48" viewBox="0 0 48 48"><defs><linearGradient id="gs" x1="0" y1="0" x2="1" y2="1"><stop offset="0" stop-color="#6aa84a"/><stop offset="1" stop-color="#a4dc80"/></linearGradient></defs><rect x="0" y="0" width="48" height="48" fill="url(#gs)"/><circle cx="28" cy="19" r="12" fill="none" stroke="#fff" stroke-width="4"/><path d="M19 28L6 42" stroke="#fff" stroke-width="5" stroke-linecap="round"/></svg>
<svg class="a" style="left:94px;top:216px" width="48" height="48" viewBox="0 0 48 48"><path d="M2 2h40v44H2z" fill="#f7cf4a"/><path d="M2 2h6v44H2z" fill="#a83a5a"/><path d="M6 8l8 6 6-4" stroke="#4cb04c" stroke-width="4" fill="none"/><path d="M22 2c0 10 10 12 8 22-2 8-16 10-26 20M4 36c10-4 20 4 38-2" stroke="#3a78d8" stroke-width="4" fill="none"/><rect x="14" y="18" width="5" height="10" fill="#3a8a9a"/><path d="M20 34L44 6" stroke="#7a3a10" stroke-width="5"/><path d="M44 6l-3-3" stroke="#5a2a0a" stroke-width="3"/></svg>
<div class="grip" style="left:167px;top:223px;height:36px"></div>
<svg class="a" style="left:192px;top:216px" width="48" height="48" viewBox="0 0 48 48"><circle cx="24" cy="24" r="23" fill="#0d5372"/><rect x="13" y="10" width="22" height="24" rx="4" fill="#fff"/><rect x="16" y="14" width="16" height="10" rx="1" fill="#0d5372"/><circle cx="18" cy="29" r="2" fill="#0d5372"/><circle cx="30" cy="29" r="2" fill="#0d5372"/><rect x="15" y="34" width="4" height="5" fill="#fff"/><rect x="29" y="34" width="4" height="5" fill="#fff"/></svg>
<div class="grip" style="left:265px;top:223px;height:36px"></div>
<svg class="a" style="left:290px;top:216px" width="48" height="48" viewBox="0 0 48 48"><rect x="4" y="8" width="14" height="30" fill="none" stroke="#e8a0a0" stroke-dasharray="2 2"/><rect x="22" y="8" width="20" height="30" fill="none" stroke="#a0d0a0" stroke-dasharray="2 2"/><text x="0" y="32" font-family="Liberation Sans" font-weight="bold" font-size="17" fill="#5a6a7a" stroke="#333" stroke-width="0.4">GTFS</text></svg>
<div class="grip" style="left:363px;top:223px;height:36px"></div>
<svg class="a" style="left:388px;top:216px" width="48" height="48" viewBox="0 0 48 48"><rect x="2" y="2" width="42" height="40" fill="#e4e4e4" stroke="#333" stroke-width="1.5" stroke-dasharray="3 2"/><rect x="2" y="2" width="26" height="26" fill="#f6d43e" stroke="#b8a020"/><path d="M20 20l0 24 6-6 6 10 4-2-6-10h8z" fill="#fff" stroke="#111" stroke-width="1.8" stroke-linejoin="round"/></svg>
<svg class="a" style="left:449px;top:236px" width="14" height="8" viewBox="0 0 14 8"><path d="M0 0h14l-7.0 8z" fill="#555"/></svg>
<svg class="a" style="left:479px;top:216px" width="48" height="48" viewBox="0 0 48 48"><rect x="6" y="20" width="32" height="26" fill="#f6d43e" stroke="#b8a020" stroke-width="2"/><rect x="2" y="4" width="30" height="28" fill="#e0e4e8" stroke="#888" stroke-width="2"/><rect x="6" y="9" width="22" height="7" fill="#fff" stroke="#888"/><rect x="6" y="20" width="22" height="7" fill="#fff" stroke="#888"/></svg>
<svg class="a" style="left:539px;top:236px" width="14" height="8" viewBox="0 0 14 8"><path d="M0 0h14l-7.0 8z" fill="#555"/></svg>
<svg class="a" style="left:570px;top:216px" width="48" height="48" viewBox="0 0 48 48"><rect x="2" y="4" width="28" height="28" fill="#f6d43e" stroke="#b8a020" stroke-width="2"/><rect x="10" y="12" width="28" height="28" fill="#f6d43e" stroke="#b8a020" stroke-width="2"/><rect x="24" y="28" width="20" height="20" rx="3" fill="#d81e1e"/><circle cx="34" cy="38" r="6" fill="none" stroke="#fff" stroke-width="2.5"/><path d="M30 42l8-8" stroke="#fff" stroke-width="2.5"/></svg>
<svg class="a" style="left:629px;top:236px" width="14" height="8" viewBox="0 0 14 8"><path d="M0 0h14l-7.0 8z" fill="#555"/></svg>
<svg class="a" style="left:659px;top:216px" width="48" height="48" viewBox="0 0 48 48"><rect x="2" y="4" width="30" height="30" fill="#f6d43e" stroke="#b8a020" stroke-width="2"/><path d="M38 46c-4-5-7-9-7-12a7 7 0 0 1 14 0c0 3-3 7-7 12z" fill="#6a90b8" stroke="#3a5a80"/><circle cx="38" cy="34" r="2.5" fill="#fff"/></svg>
<div class="grip" style="left:1908px;top:223px;height:36px"></div>
<div class="grip" style="left:1941px;top:223px;height:36px"></div>
<svg class="a" style="left:1968px;top:216px" width="48" height="48" viewBox="0 0 48 48"><path d="M6 18c0-10 8-16 18-16 8 0 14 4 16 10 4 0 6 4 4 8-2 3-4 3-6 3l-2 8h-5l-1-5h-8l-2 5h-6l-1-7c-4-1-7-3-7-6z" fill="#f0e020" stroke="#807010" stroke-width="1.5"/><circle cx="16" cy="38" r="8" fill="#3a80c8" stroke="#2a5a8a"/><path d="M12 34c3 2 6 1 7 5" stroke="#4ab04a" stroke-width="3" fill="none"/><path d="M34 28v12h-6l9 8 9-8h-6V28z" fill="#22c022" stroke="#118811"/></svg>
<svg class="a" style="left:2028px;top:231px" width="20" height="18" viewBox="0 0 20 18"><path d="M3 3l6 6-6 6M11 3l6 6-6 6" fill="none" stroke="#333" stroke-width="2"/></svg>
<div class="t" style="left:3.0px;top:288.8px;font-size:21.5px;font-weight:normal;font-style:normal;color:#262626;letter-spacing:0.69px;">Browser</div>
<svg class="a" style="left:274px;top:288px" width="22" height="22" viewBox="0 0 22 22"><rect x="1" y="1" width="20" height="20" rx="3" fill="none" stroke="#6a6a6a" stroke-width="1.6"/><rect x="5" y="9" width="8" height="8" fill="none" stroke="#6a6a6a" stroke-width="1.6"/><path d="M9 9V5h8v8h-4" fill="none" stroke="#6a6a6a" stroke-width="1.6"/></svg>
<svg class="a" style="left:302px;top:288px" width="22" height="22" viewBox="0 0 22 22"><rect x="1" y="1" width="20" height="20" rx="3" fill="none" stroke="#6a6a6a" stroke-width="1.6"/><path d="M6 6l10 10M16 6L6 16" stroke="#6a6a6a" stroke-width="3.8"/></svg>
<svg class="a" style="left:10px;top:332px" width="32" height="32" viewBox="0 0 32 32"><rect x="2" y="2" width="22" height="22" fill="#f4f4f4" stroke="#777" stroke-width="2"/><rect x="18" y="18" width="13" height="13" rx="2" fill="#5e9e5e"/><path d="M24.5 20.5v8M20.5 24.5h8" stroke="#fff" stroke-width="2.4"/></svg>
<svg class="a" style="left:60px;top:332px" width="32" height="32" viewBox="0 0 32 32"><path d="M3 14c1-7 7-11 13-11 4 0 7 2 9 4l3-3v10h-10l4-4c-1-2-4-3-6-3-4 0-7 3-8 7z" fill="#5a92d6" stroke="#2c62a6"/><path d="M29 18c-1 7-7 11-13 11-4 0-7-2-9-4l-3 3V18h10l-4 4c1 2 4 3 6 3 4 0 7-3 8-7z" fill="#5a92d6" stroke="#2c62a6"/></svg>
<svg class="a" style="left:110px;top:332px" width="32" height="32" viewBox="0 0 32 32"><path d="M2 4h28v4L19 18v12l-6-4v-8L2 8z" fill="#7aa4d8" stroke="#3f6ea8" stroke-width="1.5"/><rect x="2" y="3" width="28" height="4" fill="#f6e04a"/></svg>
<svg class="a" style="left:160px;top:332px" width="32" height="32" viewBox="0 0 32 32"><path d="M4 4v24M4 4h24M4 14h6M4 26h6" stroke="#999" stroke-width="1.5"/><rect x="8" y="11" width="5" height="5" fill="#f29a2a"/><rect x="8" y="23" width="5" height="5" fill="#f29a2a"/><path d="M21 4l-8 9h5v15h6V13h5z" fill="#5a92d6" stroke="#2c5c94"/></svg>
<svg class="a" style="left:210px;top:332px" width="32" height="32" viewBox="0 0 32 32"><circle cx="16" cy="16" r="13" fill="#6a9ad4" stroke="#3f6ea8" stroke-width="1.5"/><text x="12" y="24" font-family="Liberation Serif" font-style="italic" font-weight="bold" font-size="19" fill="#fff">i</text></svg>
<div class="a" style="left:0px;top:380px;width:327px;height:195px;background:#fff;border:1px solid #a4a4a4;border-left:none"></div>
<div class="a" style="left:0;top:382px;width:298px;height:164px;overflow:hidden">
<svg class="a" style="left:7px;top:11px" width="10" height="14"><path d="M0 0L9 7L0 14z" fill="#555"/></svg>
<svg class="a" style="left:35px;top:5px" width="30" height="28"><path d="M2 2h10l3 4h13v20H2z" fill="#f0f0f0" stroke="#7a7a7a" stroke-width="2"/></svg>
<div class="t" style="left:78.0px;top:5.8px;font-size:25px;font-weight:normal;font-style:normal;color:#262626;letter-spacing:1.59px;">/Volumes</div>
<svg class="a" style="left:7px;top:47px" width="10" height="14"><path d="M0 0L9 7L0 14z" fill="#555"/></svg>
<svg class="a" style="left:33px;top:38px" width="34" height="33"><path d="M17 2l4.5 10 10.5 1-8 7 2.5 11L17 25.5 7.5 31 10 20 2 13l10.5-1z" fill="#f8f06a" stroke="#d4a010" stroke-width="2"/></svg>
<div class="t" style="left:78.0px;top:41.8px;font-size:25px;font-weight:normal;font-style:normal;color:#262626;letter-spacing:0.97px;">Favorites</div>
<svg class="a" style="left:7px;top:83px" width="10" height="14"><path d="M0 0L9 7L0 14z" fill="#555"/></svg>
<svg class="a" style="left:35px;top:76px" width="30" height="30"><path d="M6 2h22v26H6z" fill="#ececec" stroke="#999" stroke-width="1.5"/><path d="M6 2c-3 0-4 1-4 3v20c0 2 2 3 4 3" fill="#ddd" stroke="#999" stroke-width="1.5"/><path d="M18 1h5v11l-2.5-3-2.5 3z" fill="#6a9ad0" stroke="#2f5a8a"/></svg>
<div class="t" style="left:78.0px;top:77.8px;font-size:25px;font-weight:normal;font-style:normal;color:#262626;letter-spacing:1.10px;">Spatial Bookmarks</div>
<svg class="a" style="left:7px;top:119px" width="10" height="14"><path d="M0 0L9 7L0 14z" fill="#555"/></svg>
<svg class="a" style="left:35px;top:112px" width="30" height="28"><path d="M2 2h11l3 3h12v21H2z" fill="#b8e050" stroke="#6a6a6a" stroke-width="2"/><path d="M2 8l24 18M4 22l16-4M14 4l12 12" stroke="#eef8c0" stroke-width="1.5"/><path d="M13 9l6-3 6 5-4 6-6-3z" fill="#138a13"/></svg>
<div class="t" style="left:78.0px;top:113.8px;font-size:25px;font-weight:normal;font-style:normal;color:#262626;letter-spacing:1.10px;">Project Home</div>
<svg class="a" style="left:7px;top:155px" width="10" height="14"><path d="M0 0L9 7L0 14z" fill="#555"/></svg>
<svg class="a" style="left:35px;top:149px" width="30" height="28"><path d="M2 2h10l3 4h13v20H2z" fill="#f0f0f0" stroke="#7a7a7a" stroke-width="2"/><path d="M8 26l7-7 7 7" fill="none" stroke="#555" stroke-width="2"/></svg>
<div class="t" style="left:78.0px;top:149.8px;font-size:25px;font-weight:normal;font-style:normal;color:#262626;letter-spacing:0.44px;">Home</div>
</div>
<div class="a" style="left:298px;top:382px;width:28px;height:164px;background:linear-gradient(90deg,#fafafa,#f0f0f0);border-left:1px solid #d0d0d0"></div>
<div class="a" style="left:298px;top:407px;width:28px;height:2px;background:#c8c8c8"></div>
<div class="a" style="left:300px;top:462px;width:25px;height:56px;background:#dcdcdc"></div>
<div class="a" style="left:298px;top:519px;width:28px;height:2px;background:#c8c8c8"></div>
<svg class="a" style="left:304px;top:391px" width="16" height="9" viewBox="0 0 16 9"><path d="M0 9L8.0 0L16 9z" fill="#555"/></svg>
<svg class="a" style="left:304px;top:527px" width="16" height="9" viewBox="0 0 16 9"><path d="M0 0L8.0 9L16 0z" fill="#555"/></svg>
<div class="a" style="left:0px;top:546px;width:298px;height:28px;background:linear-gradient(#fafafa,#f0f0f0);border-top:2px solid #d0d0d0"></div>
<div class="a" style="left:21px;top:548px;width:1px;height:26px;background:#c8c8c8"></div>
<div class="a" style="left:208px;top:548px;width:61px;height:26px;background:#dcdcdc"></div>
<div class="a" style="left:270px;top:548px;width:1px;height:26px;background:#c8c8c8"></div>
<svg class="a" style="left:4px;top:552px" width="9" height="16" viewBox="0 0 9 16"><path d="M9 0L0 8.0L9 16z" fill="#555"/></svg>
<svg class="a" style="left:279px;top:552px" width="9" height="16" viewBox="0 0 9 16"><path d="M0 0L9 8.0L0 16z" fill="#555"/></svg>
<div class="a" style="left:298px;top:546px;width:28px;height:28px;background:#f4f4f4;border-left:1px solid #d0d0d0;border-top:2px solid #d0d0d0"></div>
<div class="a" style="left:146px;top:578px;width:36px;height:5px;background-image:radial-gradient(circle at 2px 2px,#b8b8b8 1.2px,transparent 1.4px);background-size:6px 5px"></div>
<div class="t" style="left:3.0px;top:596.4px;font-size:21.5px;font-weight:normal;font-style:normal;color:#262626;letter-spacing:0.50px;">Layers</div>
<svg class="a" style="left:274px;top:596px" width="22" height="22" viewBox="0 0 22 22"><rect x="1" y="1" width="20" height="20" rx="3" fill="none" stroke="#6a6a6a" stroke-width="1.6"/><rect x="5" y="9" width="8" height="8" fill="none" stroke="#6a6a6a" stroke-width="1.6"/><path d="M9 9V5h8v8h-4" fill="none" stroke="#6a6a6a" stroke-width="1.6"/></svg>
<svg class="a" style="left:302px;top:596px" width="22" height="22" viewBox="0 0 22 22"><rect x="1" y="1" width="20" height="20" rx="3" fill="none" stroke="#6a6a6a" stroke-width="1.6"/><path d="M6 6l10 10M16 6L6 16" stroke="#6a6a6a" stroke-width="3.8"/></svg>
<div class="a" style="left:2px;top:634px;width:48px;height:46px;background:#d8d8d8;border:2px solid #adadad;border-radius:6px"></div>
<svg class="a" style="left:10px;top:641px" width="32" height="32" viewBox="0 0 32 32"><path d="M2 16l14-8 4 10-12 8z" fill="#e83838"/><path d="M4 12l12-6 4 10-12 6z" fill="#6a9ad8"/><path d="M6 9l10-5 4 10-10 5z" fill="#f8e040"/><path d="M10 18l10-8 6 6-10 8z" fill="#d8a860" stroke="#a07030"/><path d="M22 13l8-9" stroke="#d89030" stroke-width="3.5" stroke-linecap="round"/></svg>
<svg class="a" style="left:60px;top:640px" width="32" height="32" viewBox="0 0 32 32"><path d="M4 10v18h18" fill="none" stroke="#888" stroke-width="1.5"/><rect x="8" y="6" width="18" height="18" fill="#f4f4f4" stroke="#888" stroke-width="1.5"/><path d="M14 20V4c0-3 6-3 6 0v12" fill="none" stroke="#3a6aa8" stroke-width="2"/><rect x="17" y="17" width="14" height="14" rx="2" fill="#5e9e5e"/><path d="M24 19.5v9M19.5 24h9" stroke="#fff" stroke-width="2.6"/></svg>
<svg class="a" style="left:108px;top:640px" width="32" height="32" viewBox="0 0 32 32"><path d="M2 15c6-8 20-8 26 0-6 7-20 7-26 0z" fill="#fff" stroke="#888" stroke-width="1.5"/><circle cx="15" cy="15" r="6" fill="#6a9ad8" stroke="#335"/><circle cx="15" cy="15" r="2.5" fill="#111"/><path d="M23 25h8l-4 4z" fill="#555"/></svg>
<svg class="a" style="left:162px;top:640px" width="32" height="32" viewBox="0 0 32 32"><path d="M2 4h24v4L17 18v12l-5-5v-7L2 8z" fill="#7aa4d8" stroke="#3f6ea8" stroke-width="1.5"/><rect x="2" y="3" width="24" height="4" fill="#f6e04a"/><path d="M22 25h9l-4.5 4z" fill="#555"/></svg>
<svg class="a" style="left:212px;top:640px" width="32" height="32" viewBox="0 0 32 32"><text x="-1" y="22" font-family="Liberation Serif" font-size="34" fill="#5a2a7a">ε</text><path d="M15 31V20c0-2 2-2 6-2s6 0 6 2v11h-4v-6h-4v6z" fill="#b8b8b8" stroke="#999"/></svg>
<svg class="a" style="left:254px;top:652px" width="16" height="9" viewBox="0 0 16 9"><path d="M0 0L8.0 9L16 0z" fill="#555"/></svg>
<svg class="a" style="left:301px;top:647px" width="20" height="18" viewBox="0 0 20 18"><path d="M3 3l6 6-6 6M11 3l6 6-6 6" fill="none" stroke="#333" stroke-width="2"/></svg>
<div class="a" style="left:0px;top:688px;width:327px;height:639px;background:#fff;border:1px solid #a4a4a4;border-left:none"></div>
<div class="a" style="left:0px;top:690px;width:325px;height:35px;background:#dcdcdc"></div>
<div class="a" style="left:43px;top:694px;width:27px;height:27px;background:#fff;border:2px solid #b0b0b0;border-radius:2px"></div>
<svg class="a" style="left:43px;top:694px" width="27" height="27" viewBox="0 0 27 27"><path d="M6 13l5 8 9-15" fill="none" stroke="#1e1e1e" stroke-width="3.2" stroke-linejoin="miter"/></svg>
<svg class="a" style="left:92px;top:702px" width="12" height="12" viewBox="0 0 12 12"><circle cx="6" cy="6" r="3.5" fill="none" stroke="#8fd88f" stroke-width="2"/></svg>
<div class="a" style="left:0;top:690px;width:325px;height:150px;overflow:hidden">
<div class="t" style="left:127.0px;top:5.8px;font-size:25px;font-weight:bold;font-style:normal;color:#111;letter-spacing:0.00px;text-decoration:underline;text-decoration-thickness:2.5px;text-underline-offset:3px;text-decoration-skip-ink:none;letter-spacing:1.2px">waste_by_station_september_2023</div>
<div class="t" style="left:87.0px;top:41.3px;font-size:25px;font-weight:bold;font-style:normal;color:#222;letter-spacing:0.00px;letter-spacing:1.1px">waste_disposal_september_2023</div>
<div class="t" style="left:128.5px;top:77.4px;font-size:25px;font-weight:bold;font-style:italic;color:#808080;letter-spacing:0.00px;letter-spacing:1.2px">landfill_sites</div>
<div class="t" style="left:127.0px;top:113.6px;font-size:25px;font-weight:bold;font-style:normal;color:#222;letter-spacing:0.98px;">wards</div>
</div>
<svg class="a" style="left:44px;top:729px" width="29" height="32" viewBox="0 0 29 32"><rect x="1.5" y="1.5" width="26" height="29" rx="3" fill="#f0f0f0" stroke="#777" stroke-width="2"/><path d="M2 8h25" stroke="#999"/><path d="M5 5h6M15 5h9M5 13h6M15 13h9M5 19h6M15 19h9M5 25h6M15 25h9" stroke="#777" stroke-width="1.6"/></svg>
<div class="a" style="left:43px;top:766px;width:27px;height:27px;background:#fff;border:2px solid #b0b0b0;border-radius:2px"></div>
<svg class="a" style="left:92px;top:774px" width="12" height="12" viewBox="0 0 12 12"><circle cx="6" cy="6" r="3" fill="#7a2a8a"/></svg>
<div class="a" style="left:284px;top:764px;width:32px;height:32px;background:#fff;border:1px solid #dcdcdc;border-radius:4px"></div>
<svg class="a" style="left:284px;top:764px" width="32" height="32" viewBox="0 0 32 32"><path d="M5 6h22v4l-8 8v10l-6-4v-6L5 10z" fill="#fff" stroke="#777" stroke-width="2"/><path d="M5 8h22" stroke="#777" stroke-width="2"/></svg>
<div class="a" style="left:43px;top:802px;width:27px;height:27px;background:#fff;border:2px solid #b0b0b0;border-radius:2px"></div>
<svg class="a" style="left:43px;top:802px" width="27" height="27" viewBox="0 0 27 27"><path d="M6 13l5 8 9-15" fill="none" stroke="#1e1e1e" stroke-width="3.2" stroke-linejoin="miter"/></svg>
<div class="a" style="left:82px;top:800px;width:32px;height:32px;background:#a0a0a0"></div>
<div class="a" style="left:0px;top:1298px;width:326px;height:28px;background:linear-gradient(#fafafa,#f0f0f0);border-top:2px solid #d0d0d0"></div>
<div class="a" style="left:21px;top:1300px;width:1px;height:26px;background:#c8c8c8"></div>
<div class="a" style="left:124px;top:1300px;width:173px;height:26px;background:#dcdcdc"></div>
<div class="a" style="left:298px;top:1300px;width:1px;height:26px;background:#c8c8c8"></div>
<svg class="a" style="left:5px;top:1304px" width="9" height="16" viewBox="0 0 9 16"><path d="M9 0L0 8.0L9 16z" fill="#555"/></svg>
<svg class="a" style="left:307px;top:1304px" width="9" height="16" viewBox="0 0 9 16"><path d="M0 0L9 8.0L0 16z" fill="#555"/></svg>
<div class="a" style="left:332px;top:788px;width:5px;height:36px;background-image:radial-gradient(circle at 2px 2px,#b8b8b8 1.2px,transparent 1.4px);background-size:5px 6px"></div>
<div class="a" style="left:340px;top:280px;width:813px;height:1047px;background:#fff;border:1px solid #a4a4a4"></div>
<svg class="a" style="left:0;top:0" width="2054" height="1372">
<defs>
<radialGradient id="gb" cx="50%" cy="50%" r="50%"><stop offset="0" stop-color="#fafdfa"/><stop offset="0.25" stop-color="#c9ecc9"/><stop offset="0.5" stop-color="#92d792"/><stop offset="0.75" stop-color="#55c255"/><stop offset="1" stop-color="#1eac1e"/></radialGradient>
<clipPath id="cp"><polygon points="560.4,306.7 595.5,317.9 611.5,327.9 624.6,342.7 623.4,365.8 639.4,368.6 661.4,364.6 673.3,374.6 676.1,403.8 666.5,407.7 671.3,419.7 687.3,427.7 701.3,433.7 711.3,432.9 716.0,465.6 721.2,477.6 736.4,489.6 746.4,488.4 759.2,503.6 777.1,521.5 781.1,541.5 793.1,541.5 799.1,535.5 821.0,547.5 837.0,535.5 839.0,521.5 844.2,521.5 847.0,504.8 861.0,504.8 868.9,492.4 900.9,497.6 888.9,519.5 876.9,535.5 876.9,559.4 874.9,569.4 900.9,570.6 898.9,585.4 911.7,605.3 890.9,608.1 890.1,627.3 870.9,636.5 890.1,653.3 876.9,670.4 859.0,681.2 866.9,683.2 870.9,695.2 843.0,705.1 851.0,709.1 831.0,739.1 837.0,769.0 835.0,779.0 823.0,775.0 815.0,787.0 804.9,780.0 800.9,788.0 796.9,812.1 814.9,814.1 829.0,822.1 817.0,864.2 829.0,884.2 835.0,904.2 827.0,922.3 849.0,940.3 877.1,956.4 887.1,958.4 899.1,944.3 937.2,942.3 949.2,928.3 981.3,918.3 993.3,900.2 1013.3,904.2 1039.4,922.3 1041.4,956.4 1037.4,990.4 1053.4,938.3 1071.5,982.4 1037.4,1012.5 1017.4,1052.5 1035.4,1054.5 1033.4,1068.6 1049.4,1072.6 1032.9,1096.9 1024.6,1093.5 1024.6,1103.5 1011.2,1110.2 1001.2,1126.9 987.8,1133.6 974.5,1143.6 967.8,1160.3 951.1,1157.0 954.4,1177.0 941.1,1190.4 926.1,1200.4 931.1,1167.0 911.0,1147.0 909.4,1136.9 901.0,1123.6 897.7,1110.2 911.0,1095.2 931.1,1086.8 942.8,1076.8 934.4,1066.8 917.7,1040.1 901.0,1020.0 874.3,1000.0 877.1,992.4 841.0,980.4 780.9,978.4 720.8,980.4 674.7,990.4 652.6,1020.5 620.6,1052.5 580.5,1060.6 544.4,1048.5 545.3,1066.8 540.3,1075.2 538.6,1083.5 533.6,1103.5 536.9,1111.9 547.0,1108.6 553.6,1115.2 563.7,1126.9 570.3,1143.6 580.4,1158.7 580.4,1183.7 573.7,1200.4 577.0,1208.8 568.7,1233.8 565.3,1255.5 573.7,1277.2 587.0,1287.2 600.4,1298.9 582.0,1298.9 577.0,1298.9 563.7,1280.6 547.0,1275.6 526.9,1260.5 510.2,1243.8 500.2,1217.1 491.9,1200.4 488.5,1180.4 488.5,1153.6 481.8,1133.6 480.2,1116.9 468.5,1100.2 453.4,1098.5 443.4,1080.2 433.4,1061.8 438.4,1051.8 453.4,1041.8 458.5,1043.4 466.8,1023.4 470.1,1000.0 460.2,996.4 466.3,984.4 476.3,968.4 472.3,952.3 460.2,956.4 456.2,966.4 440.2,962.4 422.2,942.3 426.2,930.3 444.2,926.3 448.2,912.3 456.2,902.2 458.2,888.2 464.2,880.2 480.3,866.2 480.3,840.1 484.3,818.1 492.3,804.0 506.3,788.0 522.4,786.0 540.4,784.0 558.4,800.0 572.5,798.0 580.5,788.0 592.5,780.0 591.5,731.1 583.5,703.2 573.5,681.2 561.6,673.2 551.6,647.3 546.8,619.3 541.6,599.4 547.6,587.4 543.6,555.4 537.6,537.5 527.6,519.5 517.6,497.6 511.7,483.6 501.7,475.6 489.7,471.6 481.7,461.6 475.7,447.7 469.7,447.7 471.7,439.7 463.8,427.7 455.8,417.7 454.6,403.8 471.7,393.8 471.7,385.8 481.7,365.8 499.7,348.7 511.7,353.9 533.6,351.1 547.6,335.9"/></clipPath>
</defs>
<polygon points="560.4,306.7 595.5,317.9 611.5,327.9 624.6,342.7 623.4,365.8 639.4,368.6 661.4,364.6 673.3,374.6 676.1,403.8 666.5,407.7 671.3,419.7 687.3,427.7 701.3,433.7 711.3,432.9 716.0,465.6 721.2,477.6 736.4,489.6 746.4,488.4 759.2,503.6 777.1,521.5 781.1,541.5 793.1,541.5 799.1,535.5 821.0,547.5 837.0,535.5 839.0,521.5 844.2,521.5 847.0,504.8 861.0,504.8 868.9,492.4 900.9,497.6 888.9,519.5 876.9,535.5 876.9,559.4 874.9,569.4 900.9,570.6 898.9,585.4 911.7,605.3 890.9,608.1 890.1,627.3 870.9,636.5 890.1,653.3 876.9,670.4 859.0,681.2 866.9,683.2 870.9,695.2 843.0,705.1 851.0,709.1 831.0,739.1 837.0,769.0 835.0,779.0 823.0,775.0 815.0,787.0 804.9,780.0 800.9,788.0 796.9,812.1 814.9,814.1 829.0,822.1 817.0,864.2 829.0,884.2 835.0,904.2 827.0,922.3 849.0,940.3 877.1,956.4 887.1,958.4 899.1,944.3 937.2,942.3 949.2,928.3 981.3,918.3 993.3,900.2 1013.3,904.2 1039.4,922.3 1041.4,956.4 1037.4,990.4 1053.4,938.3 1071.5,982.4 1037.4,1012.5 1017.4,1052.5 1035.4,1054.5 1033.4,1068.6 1049.4,1072.6 1032.9,1096.9 1024.6,1093.5 1024.6,1103.5 1011.2,1110.2 1001.2,1126.9 987.8,1133.6 974.5,1143.6 967.8,1160.3 951.1,1157.0 954.4,1177.0 941.1,1190.4 926.1,1200.4 931.1,1167.0 911.0,1147.0 909.4,1136.9 901.0,1123.6 897.7,1110.2 911.0,1095.2 931.1,1086.8 942.8,1076.8 934.4,1066.8 917.7,1040.1 901.0,1020.0 874.3,1000.0 877.1,992.4 841.0,980.4 780.9,978.4 720.8,980.4 674.7,990.4 652.6,1020.5 620.6,1052.5 580.5,1060.6 544.4,1048.5 545.3,1066.8 540.3,1075.2 538.6,1083.5 533.6,1103.5 536.9,1111.9 547.0,1108.6 553.6,1115.2 563.7,1126.9 570.3,1143.6 580.4,1158.7 580.4,1183.7 573.7,1200.4 577.0,1208.8 568.7,1233.8 565.3,1255.5 573.7,1277.2 587.0,1287.2 600.4,1298.9 582.0,1298.9 577.0,1298.9 563.7,1280.6 547.0,1275.6 526.9,1260.5 510.2,1243.8 500.2,1217.1 491.9,1200.4 488.5,1180.4 488.5,1153.6 481.8,1133.6 480.2,1116.9 468.5,1100.2 453.4,1098.5 443.4,1080.2 433.4,1061.8 438.4,1051.8 453.4,1041.8 458.5,1043.4 466.8,1023.4 470.1,1000.0 460.2,996.4 466.3,984.4 476.3,968.4 472.3,952.3 460.2,956.4 456.2,966.4 440.2,962.4 422.2,942.3 426.2,930.3 444.2,926.3 448.2,912.3 456.2,902.2 458.2,888.2 464.2,880.2 480.3,866.2 480.3,840.1 484.3,818.1 492.3,804.0 506.3,788.0 522.4,786.0 540.4,784.0 558.4,800.0 572.5,798.0 580.5,788.0 592.5,780.0 591.5,731.1 583.5,703.2 573.5,681.2 561.6,673.2 551.6,647.3 546.8,619.3 541.6,599.4 547.6,587.4 543.6,555.4 537.6,537.5 527.6,519.5 517.6,497.6 511.7,483.6 501.7,475.6 489.7,471.6 481.7,461.6 475.7,447.7 469.7,447.7 471.7,439.7 463.8,427.7 455.8,417.7 454.6,403.8 471.7,393.8 471.7,385.8 481.7,365.8 499.7,348.7 511.7,353.9 533.6,351.1 547.6,335.9" fill="#a0a0a0" stroke="#b4b4b4" stroke-width="1"/>
<g clip-path="url(#cp)" fill="none" stroke="#cdcdcd" stroke-width="1.5" stroke-linejoin="round"><polyline points="458.5,1043.4 465.1,1056.8 480.2,1050.1 481.8,1060.1 498.5,1068.5 516.9,1053.4 543.6,1071.8"/><polyline points="516.9,1053.4 510.2,1043.4 511.9,1026.7 530.3,1020.0"/><polyline points="1004.5,1041.8 1007.9,1050.1 1001.2,1065.1 1011.2,1068.5 1034.6,1068.5"/><polyline points="704.0,433.5 680.0,475.0 655.0,520.0 648.5,550.0 643.5,575.0 645.0,615.0 646.5,660.0 645.0,680.0"/><polyline points="510.0,484.0 518.5,451.5 546.0,482.5 550.0,475.0 557.5,460.0 560.0,442.5 572.5,430.0 580.0,417.5 587.5,422.5 597.5,407.5 591.0,396.0 596.0,387.5 618.5,399.0 626.5,390.0 632.5,396.5 645.0,385.0 640.0,370.0"/><polyline points="544.0,554.0 565.0,537.5 587.5,521.0 600.0,516.0 606.0,527.5 607.5,560.0 612.5,585.0 616.5,586.0 632.5,565.0 645.0,559.0"/><polyline points="572.5,680.0 580.0,668.5 586.0,679.0 610.0,674.0 632.5,671.5 637.5,680.0 655.0,682.5 655.0,697.5 674.0,717.5 699.0,702.5 710.0,707.5 725.0,700.0 724.0,688.5 732.5,687.5 740.0,702.5 760.0,699.0 770.0,695.0 785.0,685.0 797.5,670.0 811.0,677.5 810.0,665.0 840.0,662.5 857.5,677.5 870.0,680.0"/><polyline points="655.0,682.5 647.5,705.0 640.0,730.0 632.5,760.0 635.0,790.0 640.0,805.0 642.5,830.0 640.0,870.0 635.0,905.0"/><polyline points="577.5,695.0 591.5,701.0 600.0,690.0 615.0,682.5 622.5,697.5 632.5,692.5"/><polyline points="590.0,725.0 600.0,735.0 612.5,727.5 630.0,730.0"/><polyline points="674.0,717.5 680.0,730.0 687.5,742.5 692.5,772.5 700.0,775.0 720.0,772.5 730.0,757.5 732.5,735.0 730.0,720.0 720.0,707.5"/><polyline points="785.0,685.0 782.5,710.0 782.5,730.0 771.5,747.5 760.0,755.0 750.0,760.0 730.0,770.0 700.0,775.0"/><polyline points="760.0,699.0 757.5,720.0 759.0,735.0 760.0,755.0"/><polyline points="821.0,730.0 795.0,745.0 770.0,762.5"/><polyline points="650.0,717.5 657.5,742.5 647.5,765.0 660.0,774.0 682.5,770.0"/><polyline points="590.0,755.0 610.0,760.0 627.5,757.5"/><polyline points="810.0,755.0 815.0,770.0 830.0,777.5"/><polyline points="603.7,843.5 653.8,866.9 700.6,886.9 734.0,903.6 767.4,920.3 809.2,942.0"/><polyline points="560.3,810.1 580.4,806.8 607.1,803.4 640.5,799.4 663.9,796.7"/><polyline points="630.5,766.7 637.1,793.4 640.5,803.4 642.2,826.8 640.5,843.5"/><polyline points="767.4,760.0 760.7,800.1 750.7,810.1 744.0,836.8 744.0,860.2 734.0,883.6 722.3,903.6 700.6,927.0 683.9,940.4"/><polyline points="698.3,835.2 720.6,818.5"/><polyline points="580.4,810.1 583.7,826.8 590.4,843.5 603.7,843.5 633.8,843.5"/><polyline points="496.9,823.5 506.9,840.2 515.2,856.9 506.9,870.2 516.9,880.2 513.6,896.9 511.9,913.6 506.9,920.3"/><polyline points="547.0,846.8 530.3,860.2 516.9,873.6"/><polyline points="453.4,900.3 470.1,896.9 486.8,900.3 513.6,907.0"/><polyline points="510.2,923.7 493.5,923.7 483.5,947.0 483.5,960.4 496.9,987.1 516.9,1003.8 528.6,1010.5"/><polyline points="573.7,900.3 600.4,898.6 620.4,900.3 640.5,896.9 660.5,896.3 687.2,895.3 707.3,900.3 722.3,903.6"/><polyline points="573.7,900.3 573.7,927.0"/><polyline points="600.4,900.3 597.1,923.7"/><polyline points="620.4,900.3 623.8,928.7"/><polyline points="657.2,896.9 667.2,917.0 677.2,930.3 683.9,947.0 687.2,967.1 693.9,973.8 707.3,980.4"/><polyline points="724.0,903.6 725.7,920.3 725.7,947.0 734.0,960.4 740.7,977.1"/><polyline points="780.8,913.6 810.8,896.9 834.2,907.0"/><polyline points="777.4,843.5 774.1,873.6 780.8,900.3 780.8,913.6"/><polyline points="800.8,810.1 787.4,826.8 789.1,840.2 777.4,843.5"/><polyline points="802.5,957.1 810.8,967.1 824.2,980.4"/><polyline points="867.6,990.5 877.6,970.4 921.0,993.8 947.8,1013.8 974.5,1037.2 1001.2,1047.2"/><polyline points="881.0,967.1 901.0,987.1 917.7,993.8"/><polyline points="916.0,993.8 931.1,1013.8 947.8,1023.9 967.8,1037.2 994.5,1047.2 1004.5,1043.9 1001.2,1067.3"/><polyline points="941.1,942.0 944.4,977.1 927.7,987.1"/><polyline points="683.9,947.0 700.6,973.8 710.6,953.7 720.6,940.4 737.3,937.0 750.7,947.0 767.4,960.4 780.8,960.4 787.4,973.8"/><polyline points="744.0,917.0 747.4,940.4 767.4,940.4 777.4,933.7"/><polyline points="667.2,917.0 700.6,910.3 720.6,917.0"/><polyline points="633.8,843.5 660.5,836.8 670.5,840.2 683.9,836.8"/><polyline points="662.2,780.0 667.2,793.4 683.9,790.1 693.9,786.7 693.9,810.1 697.3,833.5"/><polyline points="680.6,808.4 687.2,836.8 687.2,856.9 687.2,893.6"/><polyline points="653.8,788.4 657.2,800.1 667.2,806.8 680.6,808.4"/><polyline points="607.1,858.5 617.1,860.2 633.8,863.5 653.8,866.9"/><polyline points="633.8,846.8 637.1,880.2 620.4,896.9"/><polyline points="603.7,843.5 603.7,886.9 620.4,896.9"/><polyline points="590.4,843.5 582.0,860.2 573.7,876.9 573.7,900.3"/><polyline points="547.0,846.8 560.3,853.5 563.7,873.6 557.0,893.6 567.0,900.3"/><polyline points="547.0,820.1 547.0,846.8"/><polyline points="506.9,793.4 520.2,820.1 540.3,823.5 560.3,816.8 580.4,816.8"/><polyline points="443.4,947.0 466.8,947.0 483.5,947.0"/><polyline points="717.3,870.2 734.0,876.9 754.0,873.6"/><polyline points="717.3,843.5 720.6,860.2 730.7,876.9"/><polyline points="707.3,890.3 710.6,866.9 717.3,843.5 744.0,843.5"/><polyline points="493.5,1020.5 516.9,1013.8 528.6,1010.5"/><polyline points="460.1,1043.9 480.2,1053.9 496.9,1067.3 516.9,1053.9 543.6,1074.0"/><polyline points="510.2,1027.2 510.2,1053.9"/><polyline points="657.2,870.2 663.9,893.6"/><polyline points="667.2,873.6 672.2,893.6"/><polyline points="677.2,876.9 680.6,896.9"/><polyline points="693.9,903.6 697.3,920.3 710.6,917.0"/><polyline points="754.0,920.3 760.7,933.7"/><polyline points="800.8,947.0 784.1,960.4"/></g>
<path d="M476 663c6 0 10 4 10 9 0 3 5 6 6 12 1 8-3 12-10 12-6 0-8-4-9-8-2-5-5-9-4-15 0-6 3-10 7-10z" fill="#a0a0a0"/>
<circle cx="823" cy="717" r="21.5" fill="url(#gb)"/>
<circle cx="739" cy="821" r="17" fill="url(#gb)"/>
<circle cx="602.6" cy="998.3" r="71.6" fill="url(#gb)"/>
</svg>
<div class="t" style="left:1175.0px;top:288.8px;font-size:21.5px;font-weight:normal;font-style:normal;color:#262626;letter-spacing:0.89px;">Layer Styling</div>
<svg class="a" style="left:2002px;top:289px" width="22" height="22" viewBox="0 0 22 22"><rect x="1" y="1" width="20" height="20" rx="3" fill="none" stroke="#6a6a6a" stroke-width="1.6"/><rect x="5" y="9" width="8" height="8" fill="none" stroke="#6a6a6a" stroke-width="1.6"/><path d="M9 9V5h8v8h-4" fill="none" stroke="#6a6a6a" stroke-width="1.6"/></svg>
<svg class="a" style="left:2030px;top:289px" width="22" height="22" viewBox="0 0 22 22"><rect x="1" y="1" width="20" height="20" rx="3" fill="none" stroke="#6a6a6a" stroke-width="1.6"/><path d="M6 6l10 10M16 6L6 16" stroke="#6a6a6a" stroke-width="3.8"/></svg>
<div class="a" style="left:1173px;top:325px;width:877px;height:46px;background:linear-gradient(#fdfdfd,#eeeeee);border:2px solid #b3b3b3;border-radius:6px"></div>
<svg class="a" style="left:2018px;top:345px" width="16" height="9" viewBox="0 0 16 9"><path d="M0 0L8.0 9L16 0z" fill="#555"/></svg>
<svg class="a" style="left:1184px;top:330px" width="30" height="34" viewBox="0 0 30 34"><g fill="none" stroke="#888" stroke-width="1.8"><circle cx="10.7" cy="13" r="3"/><circle cx="24.9" cy="6.7" r="3"/><circle cx="6.8" cy="26.8" r="3"/></g></svg>
<div class="t" style="left:1223.4px;top:336.0px;font-size:26px;font-weight:normal;font-style:normal;color:#111;letter-spacing:0.72px;">waste_by_station_september _2023</div>
<svg class="a" style="left:1185px;top:394px" width="46" height="46" viewBox="0 0 32 32"><path d="M1 22l16-9 5 10-14 8z" fill="#e83838"/><path d="M3 17l14-7 5 10-14 7z" fill="#7aa4e0"/><path d="M5 13l12-6 5 10-12 6z" fill="#f8e040"/><path d="M11 22l10-8 6 6-10 8z" fill="#d8a860" stroke="#a07030"/><path d="M23 16l8-10" stroke="#d89030" stroke-width="3.5" stroke-linecap="round"/></svg>
<div class="a" style="left:1254px;top:397px;width:796px;height:46px;background:linear-gradient(#fdfdfd,#eeeeee);border:2px solid #b3b3b3;border-radius:6px"></div>
<svg class="a" style="left:2018px;top:417px" width="16" height="9" viewBox="0 0 16 9"><path d="M0 0L8.0 9L16 0z" fill="#555"/></svg>
<svg class="a" style="left:1269px;top:405px" width="30" height="30" viewBox="0 0 30 30"><rect x="1" y="1" width="22" height="7" fill="#12a850" stroke="#0a5a2a" stroke-width="1.2"/><rect x="5" y="11" width="22" height="7" fill="#12a850" stroke="#0a5a2a" stroke-width="1.2"/><rect x="1" y="21" width="22" height="7" fill="#12a850" stroke="#0a5a2a" stroke-width="1.2"/></svg>
<div class="t" style="left:1305.0px;top:407.8px;font-size:26px;font-weight:normal;font-style:normal;color:#111;letter-spacing:0.40px;">Single Symbol</div>
<div class="a" style="left:1172px;top:448px;width:76px;height:873px;background:#5c5c5c"></div>
<svg class="a" style="left:1180px;top:466px" width="46" height="28" viewBox="0 0 46 28"><path d="M2 14l8-11h34v22H10z" fill="#f8e45a" stroke="#c9a80a" stroke-width="2.5"/><text x="12" y="21" font-family="Liberation Mono" font-weight="bold" font-size="15" fill="#222">abc</text></svg>
<svg class="a" style="left:1178px;top:527px" width="50" height="30" viewBox="0 0 50 30"><path d="M6 8c4-6 12-6 16-3 4-3 12-3 16 1 8 0 12 6 10 12-1 6-8 9-14 8-4 3-12 3-16 0-6 2-14 0-16-6-2-5 0-10 4-12z" fill="#eef2fa"/><text x="6" y="23" font-family="Liberation Sans" font-weight="bold" font-size="20" fill="#333">abc</text></svg>
<svg class="a" style="left:1181px;top:585px" width="42" height="46" viewBox="0 0 42 46"><path d="M21 2l19 11-19 11L2 13z" fill="#f49a9a" stroke="#b81010" stroke-width="2.5"/><path d="M2 13l19 11v20L2 33z" fill="#8ae03a" stroke="#4a9a10" stroke-width="2.5"/><path d="M40 13L21 24v20l19-11z" fill="#f8e040" stroke="#c0a010" stroke-width="2.5"/></svg>
<svg class="a" style="left:1179px;top:649px" width="46" height="46" viewBox="0 0 46 46"><rect x="13" y="1" width="19" height="11" fill="#e05a5a" stroke="#a02020"/><path d="M22 12v22M8 18v14M36 18v14M8 18h28" stroke="#d8a040" stroke-width="5"/><rect x="1" y="32" width="17" height="13" fill="#f8e050" stroke="#c0a010"/><rect x="27" y="32" width="18" height="13" fill="#8ab8f0" stroke="#4a78b0"/></svg>
<svg class="a" style="left:1183px;top:714px" width="42" height="42" viewBox="0 0 42 42"><path d="M4 18c0-8 6-12 14-12V1l10 9-10 9v-5c-5 0-8 2-8 6 0 2 1 4 2 5-5-1-8-3-8-7z" fill="#7ac47a" stroke="#4a9a4a"/><path d="M38 30c0 7-5 11-12 11v5l-10-9 10-9v5c4 0 6-2 6-5 0-2-1-3-2-4 5 1 8 3 8 6z" fill="#f0883a" stroke="#c0601a"/></svg>
<div class="a" style="left:1354px;top:468px;width:2px;height:200px;background:#a8a8a8"></div>
<div class="a" style="left:1254px;top:568px;width:200px;height:2px;background:#a8a8a8"></div>
<div class="a" style="left:1466px;top:456px;width:447px;height:223px;background:#fff;border:2px solid #b9b9b9"></div>
<div class="a" style="left:1468px;top:566px;width:443px;height:35px;background:#dcdcdc"></div>
<svg class="a" style="left:1480px;top:472px" width="17" height="9" viewBox="0 0 17 9"><path d="M0 0L8.5 9L17 0z" fill="#555"/></svg>
<svg class="a" style="left:1520px;top:508px" width="17" height="9" viewBox="0 0 17 9"><path d="M0 0L8.5 9L17 0z" fill="#555"/></svg>
<svg class="a" style="left:1560px;top:544px" width="17" height="9" viewBox="0 0 17 9"><path d="M0 0L8.5 9L17 0z" fill="#555"/></svg>
<svg class="a" style="left:1523px;top:469px" width="17" height="17" viewBox="0 0 17 17"><circle cx="8.5" cy="8.5" r="5" fill="none" stroke="#6cc46c" stroke-width="3.2"/></svg>
<svg class="a" style="left:1594px;top:532px" width="32" height="32" viewBox="0 0 32 32"><rect x="1" y="1" width="30" height="30" fill="#2db52d" stroke="#22a022" stroke-width="1"/><rect x="5" y="5" width="22" height="22" fill="#5cc85c"/><rect x="9" y="9" width="14" height="14" fill="#9ade9a"/><rect x="12" y="12" width="8" height="8" fill="#d4f2d4"/><rect x="14" y="14" width="4" height="4" fill="#fff"/></svg>
<svg class="a" style="left:1634px;top:568px" width="32" height="32" viewBox="0 0 32 32"><rect x="1" y="1" width="30" height="30" fill="#2db52d" stroke="#22a022" stroke-width="1"/><rect x="5" y="5" width="22" height="22" fill="#5cc85c"/><rect x="9" y="9" width="14" height="14" fill="#9ade9a"/><rect x="12" y="12" width="8" height="8" fill="#d4f2d4"/><rect x="14" y="14" width="4" height="4" fill="#fff"/></svg>
<div class="t" style="left:1559.0px;top:463.3px;font-size:26px;font-weight:bold;font-style:normal;color:#1a1a1a;letter-spacing:0.75px;">Marker</div>
<div class="t" style="left:1598.8px;top:498.8px;font-size:26px;font-weight:normal;font-style:normal;color:#1a1a1a;letter-spacing:0.32px;">Filled Marker</div>
<div class="t" style="left:1639.3px;top:535.0px;font-size:26px;font-weight:bold;font-style:normal;color:#1a1a1a;letter-spacing:-0.74px;">Fill</div>
<div class="t" style="left:1679.0px;top:570.6px;font-size:26px;font-weight:normal;font-style:normal;color:#111;letter-spacing:0.37px;">Shapeburst Fill</div>
<div class="a" style="left:1926px;top:457px;width:56px;height:47px;background:linear-gradient(#fdfdfd,#f0f0f0);border:2px solid #b3b3b3;border-radius:5px"></div>
<div class="a" style="left:1994px;top:457px;width:55px;height:47px;background:linear-gradient(#fdfdfd,#f0f0f0);border:2px solid #b3b3b3;border-radius:5px"></div>
<div class="a" style="left:1926px;top:513px;width:56px;height:47px;background:linear-gradient(#fdfdfd,#f0f0f0);border:2px solid #b3b3b3;border-radius:5px"></div>
<div class="a" style="left:1994px;top:513px;width:55px;height:47px;background:linear-gradient(#fdfdfd,#f0f0f0);border:2px solid #b3b3b3;border-radius:5px"></div>
<div class="a" style="left:1926px;top:569px;width:56px;height:47px;background:linear-gradient(#fdfdfd,#f0f0f0);border:2px solid #b3b3b3;border-radius:5px"></div>
<div class="a" style="left:1994px;top:569px;width:55px;height:47px;background:linear-gradient(#fdfdfd,#f0f0f0);border:2px solid #b3b3b3;border-radius:5px"></div>
<svg class="a" style="left:1939px;top:464px" width="30" height="32" viewBox="0 0 30 32"><path d="M11 2h8v9h9v8h-9v9h-8v-9H2v-8h9z" fill="#fff" stroke="#3a9a3a" stroke-width="2.2"/></svg>
<svg class="a" style="left:2006px;top:466px" width="32" height="28" viewBox="0 0 32 28"><path d="M2 25L16 3l14 22z" fill="#dcdcdc" stroke="#c4c4c4" stroke-width="1.5"/></svg>
<svg class="a" style="left:1940px;top:528px" width="28" height="16" viewBox="0 0 28 16"><rect x="2" y="4" width="24" height="8" fill="#f4f0f0" stroke="#dcc4c4" stroke-width="2"/></svg>
<svg class="a" style="left:2006px;top:524px" width="32" height="28" viewBox="0 0 32 28"><path d="M2 3L16 25 30 3z" fill="#dcdcdc" stroke="#c4c4c4" stroke-width="1.5"/></svg>
<svg class="a" style="left:1938px;top:577px" width="32" height="32" viewBox="0 0 32 32"><rect x="2" y="8" width="20" height="20" fill="#888" stroke="#666"/><rect x="6" y="4" width="22" height="22" fill="#f4f4f4" stroke="#666" stroke-width="1.5"/><rect x="19" y="19" width="11" height="11" rx="2" fill="#f0c040"/><path d="M24.5 21v7M21.5 22.5l6 4M21.5 26.5l6-4" stroke="#fff" stroke-width="1.6"/></svg>
<svg class="a" style="left:2006px;top:575px" width="32" height="34" viewBox="0 0 32 34"><path d="M14 14V8a6 6 0 0 1 12 0v3" fill="none" stroke="#777" stroke-width="2.5"/><rect x="4" y="15" width="22" height="15" rx="2" fill="#f0d820" stroke="#b09a10" stroke-width="1.5"/></svg>
<div class="a" style="left:1255px;top:691px;width:794px;height:2px;background:#cfcfcf"></div>
<div class="a" style="left:1255px;top:693px;width:794px;height:1px;background:#fafafa"></div>
<div class="t" style="left:1256.8px;top:724.3px;font-size:26px;font-weight:normal;font-style:normal;color:#222;letter-spacing:0.59px;">Symbol layer type</div>
<div class="a" style="left:1476px;top:712px;width:546px;height:47px;background:linear-gradient(#fdfdfd,#eeeeee);border:2px solid #b3b3b3;border-radius:6px"></div>
<svg class="a" style="left:1991px;top:732px" width="16" height="9" viewBox="0 0 16 9"><path d="M0 0L8.0 9L16 0z" fill="#555"/></svg>
<div class="t" style="left:1486.5px;top:724.0px;font-size:26px;font-weight:normal;font-style:normal;color:#111;letter-spacing:0.40px;">Shapeburst Fill</div>
<div class="a" style="left:1473px;top:706px;width:296px;height:57px;border:3px solid #ff2a0a"></div>
<div class="t" style="left:1275.0px;top:788.0px;font-size:26px;font-weight:bold;font-style:normal;color:#222;letter-spacing:0.43px;">Gradient Colors</div>
<svg class="a" style="left:1273px;top:841px" width="30" height="30" viewBox="0 0 30 30"><circle cx="15" cy="15" r="13" fill="#fff" stroke="#a8a8a8" stroke-width="2"/><circle cx="15" cy="15" r="6.5" fill="#3a3a3a"/></svg>
<div class="t" style="left:1314.8px;top:843.5px;font-size:26px;font-weight:normal;font-style:normal;color:#222;letter-spacing:0.97px;">Two color</div>
<div class="a" style="left:1472px;top:828px;width:435px;height:55px;background:linear-gradient(#fdfdfd,#f0f0f0);border:2px solid #b3b3b3;border-radius:5px"></div>
<div class="a" style="left:1908px;top:828px;width:24px;height:55px;background:linear-gradient(#fdfdfd,#f0f0f0);border:2px solid #b3b3b3;border-radius:5px"></div>
<div class="a" style="left:1482px;top:840px;width:416px;height:32px;background:#12a512;border-radius:6px"></div>
<svg class="a" style="left:1913px;top:852px" width="14" height="8" viewBox="0 0 14 8"><path d="M0 0L7.0 8L14 0z" fill="#555"/></svg>
<div class="a" style="left:1472px;top:896px;width:435px;height:55px;background:linear-gradient(#fdfdfd,#f0f0f0);border:2px solid #b3b3b3;border-radius:5px"></div>
<div class="a" style="left:1908px;top:896px;width:24px;height:55px;background:linear-gradient(#fdfdfd,#f0f0f0);border:2px solid #b3b3b3;border-radius:5px"></div>
<div class="a" style="left:1482px;top:908px;width:416px;height:32px;background:#fff;border-radius:6px"></div>
<svg class="a" style="left:1913px;top:920px" width="14" height="8" viewBox="0 0 14 8"><path d="M0 0L7.0 8L14 0z" fill="#555"/></svg>
<div class="a" style="left:1452px;top:820px;width:495px;height:137px;border:3px solid #ff2a0a"></div>
<svg class="a" style="left:1950px;top:839px" width="50" height="34" viewBox="0 0 50 34"><path d="M1 17l8-9v18z" fill="#8a8a8a" stroke="#777" stroke-width="1"/><rect x="9" y="2" width="25" height="29" fill="#fafafa" stroke="#777" stroke-width="2"/><path d="M9 16h25" stroke="#777" stroke-width="2"/><path d="M14 9h15" stroke="#555" stroke-width="3.2" stroke-linecap="round"/><path d="M14 24h15" stroke="#555" stroke-width="2"/><path d="M41 26h9l-4.5 4z" fill="#555"/></svg>
<svg class="a" style="left:1950px;top:907px" width="50" height="34" viewBox="0 0 50 34"><path d="M1 17l8-9v18z" fill="#8a8a8a" stroke="#777" stroke-width="1"/><rect x="9" y="2" width="25" height="29" fill="#fafafa" stroke="#777" stroke-width="2"/><path d="M9 16h25" stroke="#777" stroke-width="2"/><path d="M14 9h15" stroke="#555" stroke-width="3.2" stroke-linecap="round"/><path d="M14 24h15" stroke="#555" stroke-width="2"/><path d="M41 26h9l-4.5 4z" fill="#555"/></svg>
<svg class="a" style="left:1273px;top:977px" width="30" height="30" viewBox="0 0 30 30"><circle cx="15" cy="15" r="13" fill="#fff" stroke="#a8a8a8" stroke-width="2"/></svg>
<div class="t" style="left:1314.6px;top:980.0px;font-size:26px;font-weight:normal;font-style:normal;color:#222;letter-spacing:0.49px;">Color ramp</div>
<div class="a" style="left:1472px;top:965px;width:435px;height:55px;background:linear-gradient(#fdfdfd,#f0f0f0);border:2px solid #b3b3b3;border-radius:5px"></div>
<div class="a" style="left:1908px;top:965px;width:24px;height:55px;background:linear-gradient(#fdfdfd,#f0f0f0);border:2px solid #b3b3b3;border-radius:5px"></div>
<div class="a" style="left:1482px;top:976px;width:416px;height:32px;background:linear-gradient(90deg,#c4c6c0,#cbcdc7 50%,#d2d2cc);border-radius:3px"></div>
<svg class="a" style="left:1913px;top:989px" width="14" height="8" viewBox="0 0 14 8"><path d="M0 0L7.0 8L14 0z" fill="#555"/></svg>
<div class="t" style="left:1275.0px;top:1036.0px;font-size:26px;font-weight:bold;font-style:normal;color:#222;letter-spacing:0.49px;">Shading Style</div>
<svg class="a" style="left:1273px;top:1087.5px" width="30" height="30" viewBox="0 0 30 30"><circle cx="15" cy="15" r="13" fill="#fff" stroke="#a8a8a8" stroke-width="2"/><circle cx="15" cy="15" r="6.5" fill="#3a3a3a"/></svg>
<div class="t" style="left:1314.6px;top:1089.7px;font-size:26px;font-weight:normal;font-style:normal;color:#222;letter-spacing:0.29px;">Whole shape</div>
<svg class="a" style="left:1950px;top:1086px" width="50" height="34" viewBox="0 0 50 34"><path d="M1 17l8-9v18z" fill="#8a8a8a" stroke="#777" stroke-width="1"/><rect x="9" y="2" width="25" height="29" fill="#fafafa" stroke="#777" stroke-width="2"/><path d="M9 16h25" stroke="#777" stroke-width="2"/><path d="M14 9h15" stroke="#555" stroke-width="3.2" stroke-linecap="round"/><path d="M14 24h15" stroke="#555" stroke-width="2"/><path d="M41 26h9l-4.5 4z" fill="#555"/></svg>
<div class="a" style="left:1254px;top:1130px;width:768px;height:44px;overflow:hidden">
<div class="a" style="left:-1254px;top:-1130px;width:2054px;height:1372px">
<svg class="a" style="left:1273px;top:1151px" width="30" height="30" viewBox="0 0 30 30"><circle cx="15" cy="15" r="13" fill="#fff" stroke="#a8a8a8" stroke-width="2"/></svg>
<div class="t" style="left:1314.5px;top:1153.5px;font-size:26px;font-weight:normal;font-style:normal;color:#222;letter-spacing:0.54px;">Set distance</div>
<div class="a" style="left:1488px;top:1143px;width:185px;height:46px;background:#fff;border:2px solid #c4c4c4;border-radius:5px"></div>
<div class="a" style="left:1643px;top:1145px;width:28px;height:44px;background:linear-gradient(#fdfdfd,#f0f0f0);border-left:2px solid #c8c8c8"></div>
<svg class="a" style="left:1650px;top:1153px" width="14" height="8" viewBox="0 0 14 8"><path d="M0 8L7.0 0L14 8z" fill="#555"/></svg>
<div class="t" style="left:1498.5px;top:1153.5px;font-size:26px;font-weight:normal;font-style:normal;color:#b4b4b4;letter-spacing:0.47px;">5.00</div>
<div class="a" style="left:1686px;top:1143px;width:245px;height:46px;background:linear-gradient(#fdfdfd,#f2f2f2);border:2px solid #cfcfcf;border-radius:6px"></div>
<div class="t" style="left:1696.0px;top:1153.5px;font-size:26px;font-weight:normal;font-style:normal;color:#b4b4b4;letter-spacing:0.08px;">Millimeters</div>
<svg class="a" style="left:1900px;top:1162px" width="16" height="8" viewBox="0 0 16 8"><path d="M0 0L8.0 8L16 0z" fill="#c4c4c4"/></svg>
<svg class="a" style="left:1950px;top:1150px" width="50" height="34" viewBox="0 0 50 34"><path d="M1 17l8-9v18z" fill="#8a8a8a" stroke="#777" stroke-width="1"/><rect x="9" y="2" width="25" height="29" fill="#fafafa" stroke="#777" stroke-width="2"/><path d="M9 16h25" stroke="#777" stroke-width="2"/><path d="M14 9h15" stroke="#555" stroke-width="3.2" stroke-linecap="round"/><path d="M14 24h15" stroke="#555" stroke-width="2"/><path d="M41 26h9l-4.5 4z" fill="#555"/></svg>
</div></div>
<div class="a" style="left:2022px;top:710px;width:27px;height:465px;background:linear-gradient(90deg,#fafafa,#f0f0f0);border-left:1px solid #d0d0d0"></div>
<div class="a" style="left:2022px;top:735px;width:27px;height:2px;background:#cfcfcf"></div>
<div class="a" style="left:2023px;top:965px;width:26px;height:181px;background:#dcdcdc"></div>
<div class="a" style="left:2022px;top:1146px;width:27px;height:2px;background:#cfcfcf"></div>
<svg class="a" style="left:2028px;top:718px" width="16" height="9" viewBox="0 0 16 9"><path d="M0 9L8.0 0L16 9z" fill="#555"/></svg>
<svg class="a" style="left:2028px;top:1156px" width="16" height="9" viewBox="0 0 16 9"><path d="M0 0L8.0 9L16 0z" fill="#555"/></svg>
<div class="a" style="left:1254px;top:1174px;width:768px;height:27px;background:linear-gradient(#fafafa,#f0f0f0);border-top:1px solid #d0d0d0"></div>
<div class="a" style="left:1279px;top:1175px;width:1px;height:26px;background:#c8c8c8"></div>
<div class="a" style="left:1973px;top:1175px;width:21px;height:26px;background:#dcdcdc"></div>
<div class="a" style="left:1995px;top:1175px;width:1px;height:26px;background:#c8c8c8"></div>
<svg class="a" style="left:1262px;top:1181px" width="8" height="15" viewBox="0 0 8 15"><path d="M8 0L0 7.5L8 15z" fill="#555"/></svg>
<svg class="a" style="left:2004px;top:1181px" width="8" height="15" viewBox="0 0 8 15"><path d="M0 0L8 7.5L0 15z" fill="#555"/></svg>
<div class="a" style="left:2022px;top:1174px;width:27px;height:27px;background:#f4f4f4;border:1px solid #d0d0d0"></div>
<svg class="a" style="left:1264px;top:1234px" width="14" height="22" viewBox="0 0 14 22"><path d="M0 0L14 11.0L0 22z" fill="#222"/></svg>
<div class="t" style="left:1298.4px;top:1232.4px;font-size:26px;font-weight:bold;font-style:normal;color:#222;letter-spacing:0.24px;">Layer Rendering</div>
<div class="a" style="left:1254px;top:1275px;width:48px;height:45px;background:linear-gradient(#fdfdfd,#f0f0f0);border:2px solid #b3b3b3;border-radius:5px"></div>
<div class="a" style="left:1314px;top:1275px;width:48px;height:45px;background:linear-gradient(#fdfdfd,#f0f0f0);border:2px solid #b3b3b3;border-radius:5px"></div>
<svg class="a" style="left:1264px;top:1283px" width="28" height="28" viewBox="0 0 28 28"><path d="M2 11l9-9v5c8 0 14 4 14 11 0 5-4 9-8 9 2-2 3-4 2-7-1-3-4-5-8-5v5z" fill="#f0883a" stroke="#c0601a"/></svg>
<svg class="a" style="left:1324px;top:1283px" width="28" height="28" viewBox="0 0 28 28"><path d="M26 11l-9-9v5c-8 0-14 4-14 11 0 5 4 9 8 9-2-2-3-4-2-7 1-3 4-5 8-5v5z" fill="#7ac47a" stroke="#4a9a4a"/></svg>
<div class="a" style="left:1687px;top:1285px;width:27px;height:27px;background:#fff;border:2px solid #b0b0b0;border-radius:2px"></div>
<svg class="a" style="left:1687px;top:1285px" width="27" height="27" viewBox="0 0 27 27"><path d="M6 13l5 8 9-15" fill="none" stroke="#1e1e1e" stroke-width="3.2" stroke-linejoin="miter"/></svg>
<div class="t" style="left:1725.0px;top:1286.0px;font-size:26px;font-weight:normal;font-style:normal;color:#222;letter-spacing:0.48px;">Live update</div>
<div class="a" style="left:1890px;top:1275px;width:159px;height:46px;background:linear-gradient(#fdfdfd,#f0f0f0);border:2px solid #b3b3b3;border-radius:5px"></div>
<div class="t" style="left:1935.6px;top:1286.0px;font-size:26px;font-weight:normal;font-style:normal;color:#111;letter-spacing:0.94px;">Apply</div>
<div class="a" style="left:1159px;top:789px;width:5px;height:36px;background-image:radial-gradient(circle at 2px 2px,#b4b4b4 1.2px,transparent 1.4px);background-size:5px 6px"></div>
<div class="a" style="left:3px;top:1335px;width:427px;height:50px;background:linear-gradient(#fdfdfd,#f4f4f4);border:2px solid #bdbdbd;border-radius:7px"></div>
<svg class="a" style="left:18px;top:1344px" width="30" height="30" viewBox="0 0 30 30"><circle cx="11" cy="11" r="8" fill="none" stroke="#777" stroke-width="2.6"/><path d="M17 17l8 8" stroke="#777" stroke-width="3" stroke-linecap="round"/></svg>
<div class="t" style="left:61.3px;top:1346.3px;font-size:25px;font-weight:normal;font-style:normal;color:#7f7f7f;letter-spacing:0.90px;">Type to locate (⌘K)</div>
<div class="a" style="left:487px;top:1330px;width:58px;height:42px;overflow:hidden">
<div class="t" style="left:2.4px;top:17.2px;font-size:24px;font-weight:normal;font-style:normal;color:#222;letter-spacing:-0.10px;">ordinate</div>
</div>
<div class="a" style="left:551px;top:1336px;width:247px;height:50px;background:linear-gradient(#fdfdfd,#f6f6f6);border:2px solid #bdbdbd;border-radius:6px"></div>
<div class="t" style="left:567.3px;top:1347.2px;font-size:24px;font-weight:normal;font-style:normal;color:#222;letter-spacing:0.48px;">2086233,-4032124</div>
<svg class="a" style="left:806px;top:1340px" width="36" height="32" viewBox="0 0 36 32"><path d="M6 4c4-3 10-2 12 3l4 12c1 5-1 9-6 10-5 1-8-2-10-6L3 12c-1-4 0-7 3-8z" fill="#fff" stroke="#222" stroke-width="2.5"/><path d="M8 8l4 10" stroke="#222" stroke-width="2.5"/><circle cx="16" cy="22" r="3" fill="none" stroke="#222" stroke-width="2"/><path d="M24 4l3-1M28 8l3-2M30 13l3-1" stroke="#222" stroke-width="2" stroke-dasharray="2 2"/></svg>
<div class="a" style="left:864px;top:1330px;width:9px;height:42px;overflow:hidden">
<div class="t" style="left:-5.0px;top:17.2px;font-size:24px;font-weight:normal;font-style:normal;color:#222;letter-spacing:0.00px;">a</div>
</div>
<div class="a" style="left:878px;top:1336px;width:186px;height:50px;background:linear-gradient(#fdfdfd,#f6f6f6);border:2px solid #bdbdbd;border-radius:6px"></div>
<div class="a" style="left:1022px;top:1338px;width:2px;height:40px;background:#d0d0d0"></div>
<div class="t" style="left:886.2px;top:1347.2px;font-size:24px;font-weight:normal;font-style:normal;color:#222;letter-spacing:-0.85px;">1:1356978</div>
<svg class="a" style="left:1035px;top:1353px" width="16" height="9" viewBox="0 0 16 9"><path d="M0 0L8.0 9L16 0z" fill="#555"/></svg>
<svg class="a" style="left:1086px;top:1343px" width="28" height="30" viewBox="0 0 28 30"><path d="M7 14V9a7 7 0 0 1 14 0v5" fill="none" stroke="#666" stroke-width="3"/><rect x="3" y="14" width="22" height="16" rx="2" fill="#5a5a5a"/></svg>
<div class="a" style="left:1129px;top:1330px;width:37px;height:42px;overflow:hidden">
<div class="t" style="left:2.0px;top:17.2px;font-size:24px;font-weight:normal;font-style:normal;color:#222;letter-spacing:0.00px;">gnifier</div>
</div>
<div class="a" style="left:1173px;top:1337px;width:184px;height:50px;background:linear-gradient(#fdfdfd,#f6f6f6);border:2px solid #bdbdbd;border-radius:6px"></div>
<div class="a" style="left:1327px;top:1339px;width:2px;height:40px;background:#d0d0d0"></div>
<div class="t" style="left:1181.8px;top:1347.2px;font-size:24px;font-weight:normal;font-style:normal;color:#222;letter-spacing:-1.33px;">100%</div>
<svg class="a" style="left:1335px;top:1348px" width="15" height="8" viewBox="0 0 15 8"><path d="M0 8L7.5 0L15 8z" fill="#555"/></svg>
<svg class="a" style="left:1335px;top:1364px" width="15" height="8" viewBox="0 0 15 8"><path d="M0 0L7.5 8L15 0z" fill="#555"/></svg>
<div class="a" style="left:1376px;top:1330px;width:24px;height:42px;overflow:hidden">
<div class="t" style="left:-3.0px;top:17.2px;font-size:24px;font-weight:normal;font-style:normal;color:#222;letter-spacing:0.66px;">tati</div>
</div>
<div class="a" style="left:1420px;top:1337px;width:185px;height:50px;background:linear-gradient(#fdfdfd,#f6f6f6);border:2px solid #bdbdbd;border-radius:6px"></div>
<div class="a" style="left:1575px;top:1339px;width:2px;height:40px;background:#d0d0d0"></div>
<div class="t" style="left:1430.8px;top:1347.2px;font-size:24px;font-weight:normal;font-style:normal;color:#222;letter-spacing:0.17px;">0.0 °</div>
<svg class="a" style="left:1583px;top:1348px" width="15" height="8" viewBox="0 0 15 8"><path d="M0 8L7.5 0L15 8z" fill="#555"/></svg>
<svg class="a" style="left:1583px;top:1364px" width="15" height="8" viewBox="0 0 15 8"><path d="M0 0L7.5 8L15 0z" fill="#555"/></svg>
<div class="a" style="left:1618px;top:1346px;width:28px;height:28px;background:#fff;border:2px solid #b0b0b0;border-radius:2px"></div>
<svg class="a" style="left:1618px;top:1346px" width="28" height="28" viewBox="0 0 27 27"><path d="M6 13l5 8 9-15" fill="none" stroke="#1e1e1e" stroke-width="3.2" stroke-linejoin="miter"/></svg>
<div class="t" style="left:1656.2px;top:1347.2px;font-size:24px;font-weight:normal;font-style:normal;color:#222;letter-spacing:-1.20px;">Render</div>
<svg class="a" style="left:1762px;top:1345px" width="32" height="28" viewBox="0 0 32 28"><g fill="none" stroke="#777" stroke-width="1.8"><path d="M2 14a14 12 0 0 1 28 0"/><path d="M6 14c0 6 4 11 10 13 6-2 10-7 10-13"/><ellipse cx="16" cy="14" rx="6" ry="12"/><path d="M2 14h28M16 2v25M4 8h24"/></g></svg>
<div class="t" style="left:1797.6px;top:1347.2px;font-size:24px;font-weight:normal;font-style:normal;color:#222;letter-spacing:-0.88px;">EPSG:3857</div>
<svg class="a" style="left:1963px;top:1344px" width="34" height="28" viewBox="0 0 34 28"><path d="M17 2c9 0 15 5 15 11s-6 11-15 11c-2 0-3 0-5-1l-6 5 1-7C4 19 2 16 2 13 2 7 8 2 17 2z" fill="#555"/><circle cx="10" cy="13" r="2.3" fill="#fff"/><circle cx="17" cy="13" r="2.3" fill="#fff"/><circle cx="24" cy="13" r="2.3" fill="#fff"/></svg>
<div class="a" style="left:2036px;top:1360px;width:14px;height:12px;background-image:radial-gradient(circle at 2px 2px,#b8b8b8 1.1px,transparent 1.3px);background-size:5px 5px"></div>
</body></html>
